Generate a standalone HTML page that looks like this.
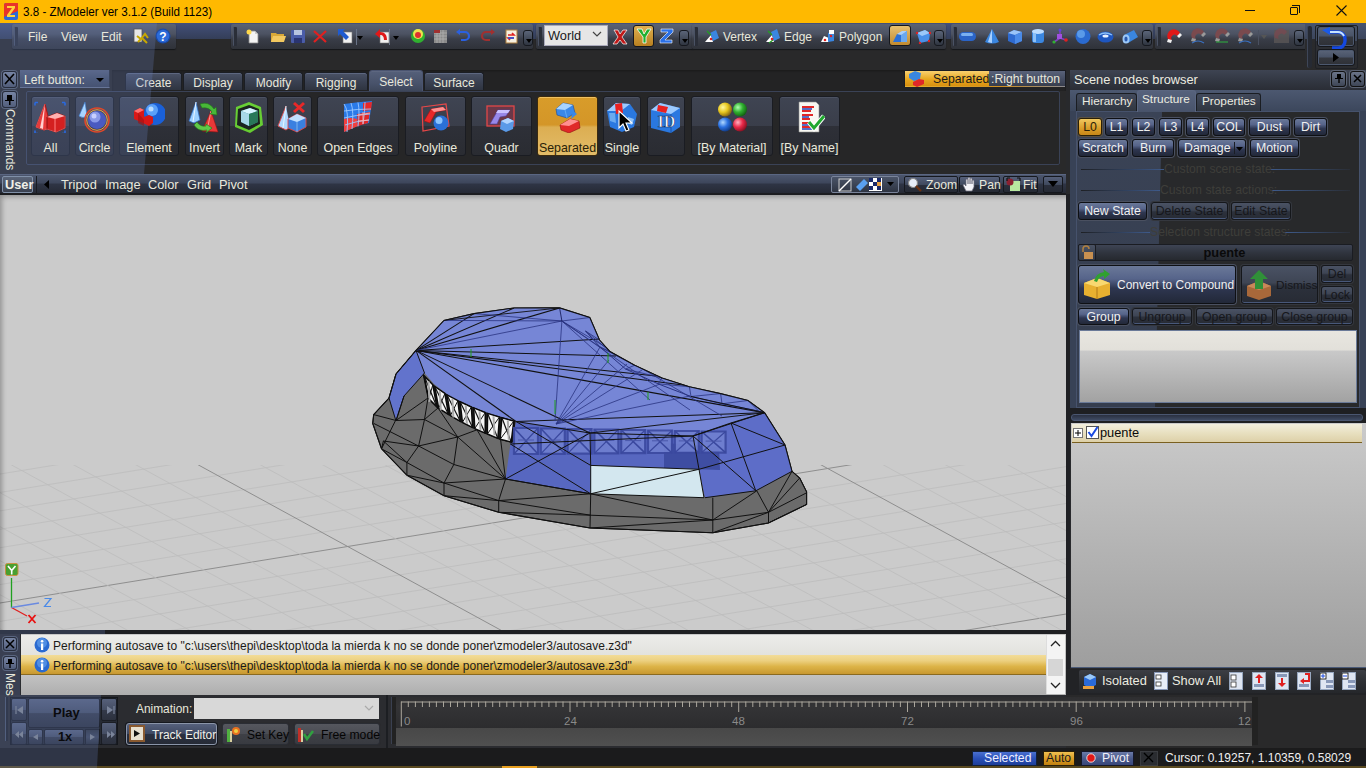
<!DOCTYPE html><html><head><meta charset="utf-8"><style>
*{box-sizing:border-box;margin:0;padding:0}
html,body{width:1366px;height:768px;overflow:hidden;background:#29292a;font-family:"Liberation Sans",sans-serif;font-size:12px;color:#e8e8dc}
.a{position:absolute}
.t{position:absolute;white-space:nowrap;line-height:1}
.grp{position:absolute;background:linear-gradient(#5a6274 0,#4c5262 40%,#393d48 60%,#2f3239 100%);border-radius:2px;box-shadow:0 1px 1px #15171a}
.grip{position:absolute;width:4px;background:#2a2e38;border-left:1px solid #4a5264;border-radius:1px}
.ovf{position:absolute;width:10px;height:16px;border:1px solid #15181e;border-radius:3px;background:linear-gradient(#5a6478,#2f3540)}
.ovf:after{content:"";position:absolute;left:2px;bottom:2px;border-left:3px solid transparent;border-right:3px solid transparent;border-top:4px solid #000}
.cb{position:absolute;border:1px solid #1a1c22;border-radius:3px;background:linear-gradient(#4f5870 0,#465066 50%,#363c4b 50%,#30353f 100%);box-shadow:inset 0 1px 0 #5f6a82}
.cb.dk{background:linear-gradient(#3f4452 0,#3a3e4a 50%,#2e3038 50%,#2a2c32 100%);box-shadow:inset 0 1px 0 #4c5262}
.cb .l{position:absolute;left:0;right:0;bottom:3px;text-align:center;font-size:12px;color:#eaeadc;white-space:nowrap}
.tab{position:absolute;top:72px;height:18px;background:linear-gradient(#4a5266,#3a4152 50%,#2f3440);border:1px solid #1b1e24;border-bottom:none;border-radius:3px 3px 0 0;text-align:center;font-size:12px;padding-top:3px;box-shadow:inset 0 1px 0 #5d6780}
.sb{position:absolute;height:19px;border:1px solid #12141a;border-radius:3px;background:linear-gradient(#5d6985 0,#4a5670 45%,#2e3446 55%,#262b38 100%);box-shadow:inset 0 1px 0 #7080a0,0 0 0 1px #3e4452;text-align:center;font-size:12px;padding-top:3px;color:#eef}
.sb.dis{color:#3c3f46;background:linear-gradient(#3a3f4c,#2e323c 50%,#24272e 55%,#202228);box-shadow:inset 0 1px 0 #4a5060,0 0 0 1px #33373f}
</style></head><body>
<div class="a" style="left:0;top:0;width:1366px;height:23px;background:#ffb900">
<svg class="a" style="left:4px;top:3px" width="14" height="17" viewBox="0 0 14 17"><rect x="0" y="0" width="14" height="17" rx="2" fill="#2a6ad8"/><path d="M0 2 Q0 0 2 0 H14 V8 L0 14Z" fill="#e8332a"/><path d="M3 3 H11 V5 L6 12 H11 V14 H3 V12 L8 5 H3Z" fill="#ffd23a"/></svg>
<div class="t" style="left:23px;top:6px;font-size:12.5px;color:#000;transform:scaleX(0.93);transform-origin:0 0">3.8 - ZModeler ver 3.1.2 (Build 1123)</div>
<div class="a" style="left:1245px;top:10px;width:10px;height:1px;background:#111"></div>
<div class="a" style="left:1292px;top:5px;width:8px;height:8px;border:1px solid #111;border-width:1px 1px 0 0;border-radius:0 1px 0 0"></div>
<div class="a" style="left:1290px;top:7px;width:8px;height:8px;border:1px solid #111;border-radius:1px"></div>
<svg class="a" style="left:1336px;top:5px" width="11" height="11"><path d="M0.5 0.5 L10.5 10.5 M10.5 0.5 L0.5 10.5" stroke="#111" stroke-width="1.1"/></svg>
</div>
<div class="a" style="left:0;top:23px;width:1366px;height:171px;background:#29292a"></div>
<div class="a" style="left:0;top:23px;width:1366px;height:16px;background:linear-gradient(#43507a,#343e58)"></div>
<div class="a" style="left:112px;top:70px;width:954px;height:21px;background:#232324;box-shadow:inset 0 1px 2px #1a1a1a"></div>
<div class="grp" style="left:12px;top:24px;width:164px;height:25px"></div>
<div class="grip" style="left:14px;top:27px;height:19px"></div>
<div class="grp" style="left:231px;top:24px;width:302px;height:25px"></div>
<div class="grip" style="left:233px;top:27px;height:19px"></div>
<div class="a" style="left:356px;top:29px;width:1px;height:16px;background:#22262e;border-right:1px solid #6a7488"></div>
<div class="a" style="left:389px;top:29px;width:1px;height:16px;background:#22262e;border-right:1px solid #6a7488"></div>
<div class="ovf" style="left:523px;top:30px"></div>
<div class="grp" style="left:536px;top:24px;width:158px;height:25px"></div>
<div class="grip" style="left:538px;top:27px;height:19px"></div>
<div class="a" style="left:544px;top:25px;width:64px;height:21px;background:#e6e6e6;border:1px solid #aab"></div>
<div class="a" style="left:633px;top:25px;width:21px;height:22px;background:linear-gradient(#e0b050,#b88020);border:1px solid #15171c;border-radius:3px"></div>
<div class="ovf" style="left:679px;top:30px"></div>
<div class="grp" style="left:692px;top:24px;width:254px;height:25px"></div>
<div class="grip" style="left:694px;top:27px;height:19px"></div>
<div class="a" style="left:889px;top:25px;width:22px;height:21px;background:linear-gradient(#e8c070,#c08a30);border:1px solid #15171c;border-radius:3px"></div>
<div class="ovf" style="left:934px;top:30px"></div>
<div class="grp" style="left:951px;top:24px;width:202px;height:25px"></div>
<div class="grip" style="left:953px;top:27px;height:19px"></div>
<div class="ovf" style="left:1142px;top:30px"></div>
<div class="grp" style="left:1155px;top:24px;width:152px;height:25px"></div>
<div class="grip" style="left:1157px;top:27px;height:19px"></div>
<div class="a" style="left:1258px;top:30px;width:1px;height:15px;background:#4a5060"></div>
<div class="ovf" style="left:1294px;top:30px"></div>
<div class="a" style="left:1305px;top:23px;width:61px;height:47px;background:linear-gradient(#485470 0,#3c465c 33%,#2a2b2e 34%,#29292a 100%)"></div>
<div class="a" style="left:1307px;top:26px;width:5px;height:42px;background:#262a33;border-left:1px solid #3e4658;border-radius:2px"></div>
<div class="a" style="left:1315px;top:25px;width:43px;height:44px;background:linear-gradient(#4a5468 0,#404a5e 35%,#2e3036 36%,#2a2b2e);border:1px solid #1f2126;border-radius:2px"></div>
<div class="a" style="left:1317px;top:26px;width:38px;height:21px;border:1px solid #15171c;border-radius:3px;background:linear-gradient(#5a6478,#4a5468 45%,#35383f 55%,#2e3036);box-shadow:inset 0 0 0 1px #4c586e"></div>
<div class="a" style="left:1317px;top:49px;width:38px;height:17px;border:1px solid #15171c;border-radius:3px;background:linear-gradient(#5a6478,#4a5468 45%,#35383f 55%,#2e3036);box-shadow:inset 0 0 0 1px #4c586e"></div>
<div class="a" style="left:2px;top:71px;width:15px;height:17px;border:1px solid #111;border-radius:3px;background:linear-gradient(#7a8498,#4a5264);box-shadow:0 0 0 1px #555c6a"></div>
<div class="a" style="left:2px;top:91px;width:15px;height:17px;border:1px solid #111;border-radius:3px;background:linear-gradient(#7a8498,#4a5264);box-shadow:0 0 0 1px #555c6a"></div>
<div class="a" style="left:20px;top:70px;width:90px;height:18px;background:linear-gradient(#56607a,#455068 50%,#3a4358);border-bottom:1px solid #66708a;border-right:1px solid #2a2f3a"></div>
<div class="tab" style="left:125px;width:57px">Create</div>
<div class="tab" style="left:183px;width:60px">Display</div>
<div class="tab" style="left:244px;width:59px">Modify</div>
<div class="tab" style="left:304px;width:64px">Rigging</div>
<div class="tab" style="left:424px;width:60px">Surface</div>
<div class="tab" style="left:369px;width:54px;top:70px;height:22px;padding-top:4px;background:linear-gradient(#55607a,#48526a 60%,#3c4558);border-color:#4a5470">Select</div>
<div class="a" style="left:904px;top:70px;width:162px;height:17px;background:linear-gradient(#59627a,#474f64 50%,#373d4c);border:1px solid #1a1c22"></div>
<div class="a" style="left:905px;top:71px;width:84px;height:15px;background:linear-gradient(#f8d070,#e8a820 55%,#d89010)"></div>
<div class="a" style="left:905px;top:86px;width:160px;height:1px;background:linear-gradient(90deg,#e8b030,#d09020 60%,#8a8a90)"></div>
<div class="a" style="left:26px;top:91px;width:1034px;height:74px;background:#262627;border:1px solid #3a4256;border-radius:2px"></div>
<div class="cb dk" style="left:31px;top:96px;width:39px;height:60px;"></div>
<div class="cb dk" style="left:75px;top:96px;width:39px;height:60px;"></div>
<div class="cb dk" style="left:119px;top:96px;width:60px;height:60px;"></div>
<div class="cb dk" style="left:185px;top:96px;width:39px;height:60px;"></div>
<div class="cb dk" style="left:229px;top:96px;width:39px;height:60px;"></div>
<div class="cb dk" style="left:273px;top:96px;width:39px;height:60px;"></div>
<div class="cb dk" style="left:317px;top:96px;width:82px;height:60px;"></div>
<div class="cb dk" style="left:405px;top:96px;width:61px;height:60px;"></div>
<div class="cb dk" style="left:471px;top:96px;width:61px;height:60px;"></div>
<div class="cb" style="left:537px;top:96px;width:61px;height:60px;background:linear-gradient(#d89c2a 0,#d49628 48%,#dcae52 52%,#e2bc68 100%);border-color:#3a2a10;box-shadow:inset 0 1px 0 #f0c060"></div>
<div class="cb dk" style="left:603px;top:96px;width:38px;height:60px;"></div>
<div class="cb dk" style="left:647px;top:96px;width:38px;height:60px;"></div>
<div class="cb dk" style="left:691px;top:96px;width:82px;height:60px;"></div>
<div class="cb dk" style="left:779px;top:96px;width:61px;height:60px;"></div>
<div class="a" style="left:0px;top:174px;width:1066px;height:19px;background:linear-gradient(#4e5870,#3e475c 45%,#2e3444 55%,#262a35)"></div>
<div class="a" style="left:0px;top:174px;width:1066px;height:1px;background:#5a6682"></div>
<div class="a" style="left:2px;top:176px;width:31px;height:17px;border:1px solid #8090a8;background:linear-gradient(#5a6478,#3a4150);border-radius:2px"></div>
<div class="a" style="left:36px;top:176px;width:1px;height:17px;background:#1a1c22"></div>
<div class="a" style="left:831px;top:176px;width:68px;height:17px;border:1px solid #7a849a;border-radius:2px;background:linear-gradient(#4a5468,#2e3442)"></div>
<div class="a" style="left:904px;top:176px;width:54px;height:17px;border:1px solid #15181e;border-radius:2px;background:linear-gradient(#56607a,#404a5e 50%,#2a2f3c 52%,#262a34)"></div>
<div class="a" style="left:959px;top:176px;width:41px;height:17px;border:1px solid #15181e;border-radius:2px;background:linear-gradient(#56607a,#404a5e 50%,#2a2f3c 52%,#262a34)"></div>
<div class="a" style="left:1003px;top:176px;width:35px;height:17px;border:1px solid #15181e;border-radius:2px;background:linear-gradient(#56607a,#404a5e 50%,#2a2f3c 52%,#262a34)"></div>
<div class="a" style="left:1043px;top:176px;width:20px;height:17px;border:1px solid #15181e;border-radius:2px;background:linear-gradient(#56607a,#404a5e 50%,#2a2f3c 52%,#262a34)"></div>
<div class="a" style="left:0px;top:23px;width:158px;height:151px;background:rgba(108,130,195,0.25);clip-path:polygon(0 0,157px 0,144px 151px,0 151px);pointer-events:none"></div>
<div class="t" style="left:28px;top:31px;font-size:12px;color:#e8e8dc;">File</div>
<div class="t" style="left:61px;top:31px;font-size:12px;color:#e8e8dc;">View</div>
<div class="t" style="left:101px;top:31px;font-size:12px;color:#e8e8dc;">Edit</div>
<svg class="a" style="left:133px;top:28px;" width="16" height="16" viewBox="0 0 16 16"><rect x="1" y="1" width="8" height="13" fill="#e8e8e8" stroke="#555" stroke-width=".8"/><path d="M4 8l4 3 4-5 3 4M5 14l4-4 5 5" stroke="#c8a800" stroke-width="2" fill="none"/></svg>
<svg class="a" style="left:155px;top:28px;" width="16" height="16" viewBox="0 0 16 16"><circle cx="8" cy="8" r="7.5" fill="#1a4aa8"/><circle cx="8" cy="8" r="6.3" fill="#2c6ad8"/><text x="8" y="12.5" font-size="12" font-weight="bold" text-anchor="middle" fill="#fff" font-family="Liberation Sans">?</text></svg>
<svg class="a" style="left:245px;top:28px;opacity:1" width="16" height="16" viewBox="0 0 16 16"><path d="M4 3h6l3 3v9H4z" fill="#f4f4f4" stroke="#8a8a8a" stroke-width=".8"/><path d="M10 3v3h3" fill="#ccc"/><circle cx="4" cy="4" r="2.5" fill="#ffd84a"/></svg>
<svg class="a" style="left:270px;top:28px;opacity:1" width="16" height="16" viewBox="0 0 16 16"><path d="M1 5h5l1 1h7v8H1z" fill="#d8a838"/><path d="M3 8h13l-2 6H1z" fill="#f2c860"/></svg>
<svg class="a" style="left:290px;top:28px;opacity:1" width="16" height="16" viewBox="0 0 16 16"><rect x="1" y="2" width="14" height="13" rx="1" fill="#4a5ca8"/><rect x="4" y="2" width="8" height="5" fill="#b8c4e0"/><rect x="4" y="10" width="8" height="5" fill="#2a3470"/></svg>
<svg class="a" style="left:312px;top:28px;opacity:1" width="16" height="16" viewBox="0 0 16 16"><path d="M2 3L14 14M14 3L2 14" stroke="#e02020" stroke-width="2.2"/></svg>
<svg class="a" style="left:337px;top:28px;opacity:1" width="16" height="16" viewBox="0 0 16 16"><rect x="6" y="4" width="9" height="11" fill="#f0f0f0" stroke="#777" stroke-width=".6"/><path d="M1 1h7l-2 2 6 6-3 3-6-6-2 2z" fill="#1e5ad0"/></svg>
<svg class="a" style="left:374px;top:28px;opacity:1" width="16" height="16" viewBox="0 0 16 16"><rect x="6" y="4" width="9" height="11" fill="#f0f0f0" stroke="#777" stroke-width=".6"/><path d="M1 6l5-5v3c5 0 7 3 7 8h-3c0-3-1-5-4-5v3z" fill="#e01818"/></svg>
<svg class="a" style="left:410px;top:28px;opacity:1" width="16" height="16" viewBox="0 0 16 16"><circle cx="8" cy="8" r="7" fill="#30b030"/><circle cx="8" cy="6" r="5" fill="#f0e050"/><circle cx="8" cy="7" r="3" fill="#e03030"/></svg>
<svg class="a" style="left:432px;top:28px;opacity:1" width="16" height="16" viewBox="0 0 16 16"><rect x="2" y="2" width="13" height="13" fill="#8a8a8a"/><path d="M2 5h13M2 8h13M2 11h13M5 2v13M8 2v13M11 2v13" stroke="#b0b0b0" stroke-width=".8"/><rect x="2" y="2" width="6" height="3" fill="#a03030"/></svg>
<svg class="a" style="left:455px;top:28px;opacity:1" width="16" height="16" viewBox="0 0 16 16"><path d="M4 4h6a4 4 0 0 1 0 8H6" fill="none" stroke="#2a60e0" stroke-width="2.2"/><path d="M1 4l4-3v6z" fill="#2a60e0"/></svg>
<svg class="a" style="left:480px;top:28px;opacity:1" width="16" height="16" viewBox="0 0 16 16"><path d="M12 4H6a4 4 0 0 0 0 8h4" fill="none" stroke="#a03030" stroke-width="2.2"/><path d="M15 4l-4-3v6z" fill="#a03030"/></svg>
<svg class="a" style="left:503px;top:28px;opacity:1" width="16" height="16" viewBox="0 0 16 16"><rect x="3" y="2" width="11" height="13" fill="#f6f0e0" stroke="#b08040" stroke-width="1"/><path d="M5 7h6l-2-2M11 10H5l2 2" stroke="#e02020" stroke-width="1.6" fill="none"/><path d="M5 10h6" stroke="#2050e0" stroke-width="1.6"/></svg>
<svg class="a" style="left:357px;top:36px;" width="6" height="4" viewBox="0 0 6 4"><path d="M0 0h6L3 4z" fill="#000"/></svg>
<svg class="a" style="left:393px;top:36px;" width="6" height="4" viewBox="0 0 6 4"><path d="M0 0h6L3 4z" fill="#000"/></svg>
<div class="t" style="left:548px;top:30px;font-size:12.8px;color:#1a1a1a;">World</div>
<svg class="a" style="left:592px;top:31px;" width="10" height="7" viewBox="0 0 10 7"><path d="M1 1l4 4 4-4" stroke="#444" stroke-width="1.2" fill="none"/></svg>
<svg class="a" style="left:612px;top:27px;" width="16" height="18" viewBox="0 0 16 18"><path d="M2 3h4l2 4 3-4h4l-5 7 5 7h-4l-3-4-3 4H1l5-7z" fill="#c01818" stroke="#fff" stroke-width=".7"/></svg>
<svg class="a" style="left:636px;top:27px;" width="16" height="18" viewBox="0 0 16 18"><path d="M1 2h5l2 5 3-5h4l-5 8v6H7v-6z" fill="#20b030" stroke="#fff" stroke-width=".8"/></svg>
<svg class="a" style="left:659px;top:27px;" width="16" height="18" viewBox="0 0 16 18"><path d="M2 2h12v3l-8 8h7v3H1v-3l8-8H2z" fill="#2a70e8" stroke="#fff" stroke-width=".6"/></svg>
<svg class="a" style="left:704px;top:28px;opacity:1" width="16" height="16" viewBox="0 0 16 16"><path d="M1 14L7 7l2 7z" fill="#fff"/><path d="M6 5l6-3 3 8-6 3z" fill="#3a86e0"/><path d="M3 3l4 4" stroke="#20a020" stroke-width="1.2"/><circle cx="7" cy="11" r="1.3" fill="#e02020"/></svg>
<div class="t" style="left:723px;top:31px;font-size:12px;color:#e8e8dc;">Vertex</div>
<svg class="a" style="left:765px;top:28px;opacity:1" width="16" height="16" viewBox="0 0 16 16"><path d="M1 14L7 7l2 7z" fill="#fff"/><path d="M6 4l6-3 3 9-6 3z" fill="#3a86e0"/><path d="M3 3l4 4M4 15l4-3" stroke="#20a020" stroke-width="1.2"/><circle cx="7" cy="11" r="1.3" fill="#e02020"/></svg>
<div class="t" style="left:784px;top:31px;font-size:12px;color:#e8e8dc;">Edge</div>
<svg class="a" style="left:820px;top:28px;opacity:1" width="16" height="16" viewBox="0 0 16 16"><path d="M1 14l3-6 5 2v4z" fill="#fff"/><path d="M8 5l6-2v10l-6 1z" fill="#3a86e0"/><rect x="9" y="2" width="5" height="4" fill="#fff"/><circle cx="5" cy="12" r="1.3" fill="#e02020"/><circle cx="11" cy="8" r="1.2" fill="#e02020"/></svg>
<div class="t" style="left:839px;top:31px;font-size:12px;color:#e8e8dc;">Polygon</div>
<svg class="a" style="left:892px;top:28px;" width="16" height="16" viewBox="0 0 16 16"><path d="M1 14l4-8 5 1 5-4v11z" fill="#2a70d8"/><path d="M5 6l5-3 5 0-5 4z" fill="#a8d0ff"/><path d="M9 7l6-4v11H9z" fill="#6aa8f0"/></svg>
<svg class="a" style="left:915px;top:28px;opacity:1" width="16" height="16" viewBox="0 0 16 16"><path d="M2 5l8-3 5 3-1 8-9 2z" fill="#4a90e8"/><path d="M2 5l8-3 5 3-8 3z" fill="#9cc8f8"/><g fill="#e02020"><circle cx="2" cy="5" r="1.2"/><circle cx="15" cy="5" r="1.2"/><circle cx="5" cy="15" r="1.2"/><circle cx="14" cy="13" r="1.2"/></g></svg>
<svg class="a" style="left:959px;top:28px;opacity:1" width="17" height="17" viewBox="0 0 17 17"><rect x="0" y="4" width="17" height="9" rx="4.5" fill="#2a64c8"/><rect x="2" y="5" width="12" height="3" rx="1.5" fill="#7ab0f0"/></svg>
<svg class="a" style="left:984px;top:28px;opacity:1" width="17" height="17" viewBox="0 0 17 17"><path d="M8 1L1 14q7 3 14 0z" fill="#3a86e0"/><path d="M8 1L4 14q3 1 4 1z" fill="#a8d0ff"/></svg>
<svg class="a" style="left:1007px;top:28px;opacity:1" width="17" height="17" viewBox="0 0 17 17"><path d="M1 5l6-3 8 2v9l-7 3-7-3z" fill="#2e6ad0"/><path d="M1 5l6-3 8 2-7 3z" fill="#9ac4f8"/><path d="M8 7v9l7-3V4z" fill="#4a8ae8"/></svg>
<svg class="a" style="left:1030px;top:28px;opacity:1" width="17" height="17" viewBox="0 0 17 17"><rect x="2" y="2" width="12" height="13" rx="3" fill="#3a86e0"/><ellipse cx="8" cy="3.5" rx="6" ry="2.5" fill="#bcdcff"/><rect x="3" y="5" width="3" height="9" fill="#8cc0f8"/></svg>
<svg class="a" style="left:1052px;top:28px;opacity:1" width="17" height="17" viewBox="0 0 17 17"><path d="M8 2v8M8 10l6 2M8 10l-6 4" stroke="#8040c0" stroke-width="1.6"/><rect x="5" y="6" width="5" height="5" fill="#a050e0"/><circle cx="14" cy="12" r="1.8" fill="#e02020"/><circle cx="2" cy="14" r="1.6" fill="#30b030"/><circle cx="8" cy="2" r="1.5" fill="#6040e0"/></svg>
<svg class="a" style="left:1075px;top:28px;opacity:1" width="17" height="17" viewBox="0 0 17 17"><circle cx="8" cy="8.5" r="7.5" fill="#2a6ad0"/><circle cx="6" cy="6" r="4" fill="#5a9ae8"/></svg>
<svg class="a" style="left:1097px;top:28px;opacity:1" width="17" height="17" viewBox="0 0 17 17"><ellipse cx="8.5" cy="9" rx="8" ry="5.5" fill="#1e56c0"/><ellipse cx="8.5" cy="8" rx="3" ry="1.5" fill="#e8f0ff"/><path d="M2 7q6-4 13 0" stroke="#8cc0f8" stroke-width="1.4" fill="none"/></svg>
<svg class="a" style="left:1122px;top:28px;opacity:1" width="17" height="17" viewBox="0 0 17 17"><path d="M2 7l10-5 4 7-10 6z" fill="#3a86e0"/><ellipse cx="4" cy="11" rx="3.5" ry="4.5" fill="#9cc8f8"/><ellipse cx="4" cy="11" rx="1.6" ry="2.5" fill="#2a5ab0"/></svg>
<svg class="a" style="left:1166px;top:28px;opacity:1" width="16" height="16" viewBox="0 0 16 16"><path d="M2 11A6 6 0 0 1 14 5l-3 3A2 2 0 0 0 6 12z" fill="#e01818"/><path d="M2 11l4 1-1 3-4-1zM14 5l-3 3 2 2 3-3z" fill="#f0f0f0"/></svg>
<svg class="a" style="left:1190px;top:28px;opacity:1" width="16" height="16" viewBox="0 0 16 16"><path d="M2 10A6 6 0 0 1 14 4l-3 3A2 2 0 0 0 6 11z" fill="#7a4a4e"/><path d="M2 10l4 1-1 3-4-1zM14 4l-3 3 2 2 3-3z" fill="#9a9a9a"/><path d="M2 15q6-4 12 0" stroke="#3a70c0" stroke-width="1.2" fill="none"/></svg>
<svg class="a" style="left:1214px;top:28px;opacity:1" width="16" height="16" viewBox="0 0 16 16"><path d="M2 10A6 6 0 0 1 14 4l-3 3A2 2 0 0 0 6 11z" fill="#7a4a4e"/><path d="M2 10l4 1-1 3-4-1zM14 4l-3 3 2 2 3-3z" fill="#9a9a9a"/><path d="M2 14h12" stroke="#30a040" stroke-width="1.2"/></svg>
<svg class="a" style="left:1237px;top:28px;opacity:1" width="16" height="16" viewBox="0 0 16 16"><path d="M2 10A6 6 0 0 1 14 4l-3 3A2 2 0 0 0 6 11z" fill="#7a4a4e"/><path d="M2 10l4 1-1 3-4-1zM14 4l-3 3 2 2 3-3z" fill="#9a9a9a"/><path d="M2 15q6-4 12 0" stroke="#3a70c0" stroke-width="1.2" fill="none"/></svg>
<svg class="a" style="left:1261px;top:35px;" width="6" height="4" viewBox="0 0 6 4"><path d="M0 0h6L3 4z" fill="#555"/></svg>
<svg class="a" style="left:1273px;top:28px;opacity:0.8" width="17" height="16" viewBox="0 0 17 16"><rect x="1" y="2" width="15" height="13" fill="#5a5656"/><path d="M2 10A6 6 0 0 1 14 4l-3 3A2 2 0 0 0 6 11z" fill="#7a4a4e"/></svg>
<svg class="a" style="left:1320px;top:26px;" width="30" height="23" viewBox="0 0 30 23"><path d="M9 6h9a7 7 0 0 1 7 7v2a7 7 0 0 1-7 7h-6" fill="none" stroke="#1448e0" stroke-width="3.4"/><path d="M9 6h9a7 7 0 0 1 6 4" fill="none" stroke="#c8e4ff" stroke-width="2"/><path d="M2 4l8-3v8z" fill="#1a5ae8"/></svg>
<svg class="a" style="left:1333px;top:53px;" width="6" height="9" viewBox="0 0 6 9"><path d="M0 0l6 4.5L0 9z" fill="#000"/></svg>
<svg class="a" style="left:4px;top:73px;" width="11" height="12" viewBox="0 0 11 12"><path d="M1 1l9 10M10 1L1 11" stroke="#000" stroke-width="1.6"/></svg>
<svg class="a" style="left:4px;top:93px;" width="11" height="12" viewBox="0 0 11 12"><path d="M3 2h5v5h2v1H1V7h2z" fill="#000"/><rect x="5" y="8" width="1.5" height="4" fill="#000"/></svg>
<div class="t" style="left:3px;top:109px;font-size:12px;color:#e8e8dc;transform-origin:0 0;transform:rotate(90deg) translate(0,-13px);">Commands</div>
<div class="t" style="left:24px;top:74px;font-size:12.2px;color:#e8e8dc;">Left button:</div>
<svg class="a" style="left:96px;top:78px;" width="8" height="4" viewBox="0 0 8 4"><path d="M0 0h8L4 4z" fill="#000"/></svg>
<svg class="a" style="left:907px;top:70px;" width="18" height="17" viewBox="0 0 18 17"><path d="M2 4l6-3 6 2-1 6-6 2-5-3z" fill="#3a86e0"/><path d="M6 12l6-3 5 1v4l-7 3-4-2z" fill="#e02828"/></svg>
<div class="t" style="left:933px;top:73px;font-size:12.2px;color:#1a1a1a;">Separated</div>
<div class="t" style="left:991px;top:73px;font-size:12.2px;color:#e8e8dc;">:Right button</div>
<div class="t" style="left:31px;top:142px;width:39px;text-align:center;font-size:12.4px;color:#eaeadc">All</div>
<svg class="a" style="left:34px;top:101px;" width="32" height="32" viewBox="0 0 32 32"><path d="M1 1.5h3M1 1.5v3M31 1.5h-3M31 1.5v3M1 32.5h3M1 32.5v-3M31 32.5h-3M31 32.5v-3" stroke="#2a6ae0" stroke-width="1.6"/><path d="M11 3L2 26l8 3 7-2z" fill="#e83a3a" stroke="#a01818" stroke-width="1"/><path d="M11 3L6 27l3 1z" fill="#ffd0d0"/><path d="M13 16l10-4 8 3v12l-9 4-9-3z" fill="#d42020" stroke="#901010" stroke-width="1"/><path d="M13 16l10-4 8 3-10 3z" fill="#ffb0b0"/><path d="M21 18v13" stroke="#ff8080" stroke-width="1"/><path d="M11 3L2 26l8 3 3-1 9 3 9-4V15" fill="none" stroke="#ff7070" stroke-width=".8" opacity=".8"/></svg>
<div class="t" style="left:75px;top:142px;width:39px;text-align:center;font-size:12.4px;color:#eaeadc">Circle</div>
<svg class="a" style="left:78px;top:101px;" width="32" height="32" viewBox="0 0 32 32"><path d="M7 1L1 15q4 3 8 0z" fill="#a8d4ff" stroke="#3a7ad0" stroke-width=".6"/><circle cx="19" cy="19" r="12" fill="none" stroke="#e04828" stroke-width="1.6"/><circle cx="19" cy="19" r="10.3" fill="none" stroke="#e8a040" stroke-width="1"/><circle cx="19" cy="19" r="9" fill="#4a5ac0"/><circle cx="17" cy="16" r="5.5" fill="#8a9ae8"/><circle cx="16" cy="15" r="2.5" fill="#c8d0ff"/></svg>
<div class="t" style="left:119px;top:142px;width:60px;text-align:center;font-size:12.4px;color:#eaeadc">Element</div>
<svg class="a" style="left:133px;top:101px;" width="32" height="32" viewBox="0 0 32 32"><circle cx="22" cy="13" r="11" fill="#1a60d8"/><circle cx="19" cy="9" r="6" fill="#5aa0f8"/><circle cx="18" cy="8" r="2.5" fill="#b8dcff"/><path d="M1 10l6-3 4 2v7l5-2 4 2v6l-4 3-6-3-9-4z" fill="#d81818"/><path d="M1 10l6-3 4 2-6 3z" fill="#ff7070"/><path d="M5 12v10l6 3v-6" fill="#a01010" opacity=".6"/></svg>
<div class="t" style="left:185px;top:142px;width:39px;text-align:center;font-size:12.4px;color:#eaeadc">Invert</div>
<svg class="a" style="left:188px;top:101px;" width="32" height="32" viewBox="0 0 32 32"><path d="M8 1L1 20l5 2 6-3z" fill="#9cd0ff" stroke="#2a6ac8" stroke-width=".7"/><path d="M8 1L5 21" stroke="#e8f4ff" stroke-width="1"/><path d="M23 10L14 30l16 1z" fill="#e83838" stroke="#a01010" stroke-width=".6"/><path d="M23 10l-4 20" stroke="#ff9090" stroke-width="1"/><path d="M12 3q9-3 14 5l2-2 1 8-7-1 2-2q-3-5-10-4z" fill="#48b838" stroke="#207818" stroke-width=".6"/><path d="M6 24q4 7 13 5l-1 3 6-5-6-4v2q-6 1-9-4z" fill="#60c848" stroke="#207818" stroke-width=".6"/></svg>
<div class="t" style="left:229px;top:142px;width:39px;text-align:center;font-size:12.4px;color:#eaeadc">Mark</div>
<svg class="a" style="left:232px;top:101px;" width="32" height="32" viewBox="0 0 32 32"><path d="M4 6l13-5 12 5 2 18-13 8-15-6z" fill="#70e830" opacity=".85"/><path d="M6 8l11-4 10 4 1 15-11 6-12-5z" fill="#1c2420"/><path d="M9 10l9-3 8 3v11l-9 4-8-4z" fill="#3a9098"/><path d="M9 10l9-3 8 3-9 3z" fill="#d8f4ff"/><path d="M9 10v11l8 4V13z" fill="#a8d8e8"/><path d="M17 13v12l9-4V10z" fill="#287858"/></svg>
<div class="t" style="left:273px;top:142px;width:39px;text-align:center;font-size:12.4px;color:#eaeadc">None</div>
<svg class="a" style="left:276px;top:101px;" width="32" height="32" viewBox="0 0 32 32"><path d="M10 5L2 25l8 4 4-3" fill="#b0d8ff" stroke="#e04848" stroke-width=".9"/><path d="M10 5L7 27" stroke="#e8f4ff" stroke-width="1"/><path d="M12 18l9-5 9 4v9l-9 5-9-4z" fill="#3a80e0" stroke="#e04848" stroke-width=".9"/><path d="M12 18l9-5 9 4-9 4z" fill="#c0e0ff"/><path d="M21 21v10" stroke="#90c0f0" stroke-width=".8"/><path d="M18 2l10 9M28 2l-10 9" stroke="#e82828" stroke-width="3"/></svg>
<div class="t" style="left:317px;top:142px;width:82px;text-align:center;font-size:12.4px;color:#eaeadc">Open Edges</div>
<svg class="a" style="left:342px;top:101px;" width="32" height="32" viewBox="0 0 32 32"><path d="M2 3q14-2 28-3l-3 22q-12 2-25 9z" fill="#2a7ae8"/><path d="M2 18q7-2 13 0l1 7-14 6z" fill="#f04040"/><path d="M15 13l13-2-2 11-10 3z" fill="#e02828"/><path d="M21 2l9-1-1 8-8 1z" fill="#e82828"/><path d="M2 3q5 6 3 28M9 2q3 8 1 26M16 1.5q2 9 0 24M23 1q0 8-2 22M2 10q13-2 27-2M2 17q12-3 26-4M3 24q11-4 24-5" stroke="#9cc8ff" stroke-width=".9" fill="none"/><path d="M16 14l12-2M16 20l11-1M21 11v12" stroke="#ffb0b0" stroke-width=".9"/></svg>
<div class="t" style="left:405px;top:142px;width:61px;text-align:center;font-size:12.4px;color:#eaeadc">Polyline</div>
<svg class="a" style="left:419px;top:101px;" width="32" height="32" viewBox="0 0 32 32"><path d="M3 6l24-3 3 22-26 5z" fill="none" stroke="#e84848" stroke-width="1.2"/><path d="M5 20l7-12 12-2 3 3-10 2-6 11z" fill="#e82828" stroke="#a01010" stroke-width=".6"/><path d="M12 8l12-2 3 3-12 2z" fill="#ff9090"/><circle cx="22" cy="22" r="7.5" fill="#2a70d8"/><circle cx="20" cy="19.5" r="3.5" fill="#8ac4ff"/></svg>
<div class="t" style="left:471px;top:142px;width:61px;text-align:center;font-size:12.4px;color:#eaeadc">Quadr</div>
<svg class="a" style="left:485px;top:101px;" width="32" height="32" viewBox="0 0 32 32"><rect x="2" y="5" width="27" height="20" fill="#6a3848" stroke="#e04848" stroke-width="1.3"/><path d="M5 23l8-14h12l-4 6-6 1-3 7z" fill="#9888e8" stroke="#5040a0" stroke-width=".6"/><path d="M13 9h12l-2 3H11z" fill="#c8c0ff"/><path d="M16 20l7-3 6 3-1 8-7 3-6-3z" fill="#5a9ae8"/><path d="M16 20l7-3 6 3-7 3z" fill="#b0d4ff"/></svg>
<div class="t" style="left:537px;top:142px;width:61px;text-align:center;font-size:12.4px;color:#2a2208">Separated</div>
<svg class="a" style="left:551px;top:101px;" width="32" height="32" viewBox="0 0 32 32"><path d="M5 8l7-6 10 2 2 8-8 5-10-3z" fill="#3a88e8" stroke="#1a4a98" stroke-width=".6"/><path d="M5 8l7-6 10 2-8 5z" fill="#a8d4ff"/><path d="M14 9l2 8" stroke="#6ab0f8" stroke-width=".8"/><path d="M22 10l4 3-6 5z" fill="#3a88e8"/><path d="M9 24l10-6 9 2 1 7-11 5-8-3z" fill="#e02828" stroke="#901010" stroke-width=".6"/><path d="M9 24l10-6 9 2-10 5z" fill="#ff9090"/></svg>
<div class="t" style="left:603px;top:142px;width:38px;text-align:center;font-size:12.4px;color:#eaeadc">Single</div>
<svg class="a" style="left:606px;top:101px;" width="32" height="32" viewBox="0 0 32 32"><path d="M1 10l9-8 14 1 7 10-3 13-12 5-12-5z" fill="#2a78e0"/><path d="M1 10l9-8 14 1-9 7z" fill="#9ccaff"/><path d="M9 3l7-1 1 10-7 1z" fill="#e82020"/><path d="M3 12l6 0 1 10-6-2z" fill="#6aaaf0"/><path d="M22 16l6 2-2 6-5-2z" fill="#8cc0f8"/><path d="M13 10v17l4-4 3 7 3-1-3-7h6z" fill="#000" stroke="#fff" stroke-width="1.1"/></svg>
<div class="t" style="left:647px;top:142px;width:38px;text-align:center;font-size:12.4px;color:#eaeadc"></div>
<svg class="a" style="left:650px;top:101px;" width="32" height="32" viewBox="0 0 32 32"><path d="M1 9l9-7 20 5v19l-9 6-20-5z" fill="#2a78e0"/><path d="M1 9l9-7 20 5-9 6z" fill="#9ccaff"/><path d="M8 4l10 2-2 6-9-2z" fill="#e82020"/><path d="M21 13v19" stroke="#1a4a98" stroke-width=".8"/><text x="16.5" y="26" font-family="Liberation Serif" font-weight="bold" font-size="16" fill="#fff" text-anchor="middle" stroke="#0a2a60" stroke-width=".6">ID</text></svg>
<div class="t" style="left:691px;top:142px;width:82px;text-align:center;font-size:12.4px;color:#eaeadc">[By Material]</div>
<svg class="a" style="left:716px;top:101px;" width="32" height="32" viewBox="0 0 32 32"><defs><radialGradient id="gy" cx=".35" cy=".35" r=".7"><stop offset="0" stop-color="#fff8a0"/><stop offset=".5" stop-color="#e8c820"/><stop offset="1" stop-color="#806010"/></radialGradient><radialGradient id="gg" cx=".35" cy=".35" r=".7"><stop offset="0" stop-color="#b0ffb0"/><stop offset=".5" stop-color="#30b030"/><stop offset="1" stop-color="#106010"/></radialGradient><radialGradient id="gb" cx=".35" cy=".35" r=".7"><stop offset="0" stop-color="#b0d8ff"/><stop offset=".5" stop-color="#2a70e0"/><stop offset="1" stop-color="#103880"/></radialGradient><radialGradient id="gr" cx=".35" cy=".35" r=".7"><stop offset="0" stop-color="#ffb0c0"/><stop offset=".5" stop-color="#e82848"/><stop offset="1" stop-color="#801020"/></radialGradient></defs><circle cx="9" cy="8.5" r="7" fill="url(#gy)"/><circle cx="24" cy="8.5" r="7" fill="url(#gg)"/><circle cx="9" cy="23.5" r="7" fill="url(#gb)"/><circle cx="24" cy="23.5" r="7" fill="url(#gr)"/></svg>
<div class="t" style="left:779px;top:142px;width:61px;text-align:center;font-size:12.4px;color:#eaeadc">[By Name]</div>
<svg class="a" style="left:793px;top:101px;" width="32" height="32" viewBox="0 0 32 32"><path d="M6 1h17l3 3v27H6z" fill="#f8f8f2" stroke="#909090" stroke-width=".6"/><path d="M9 6h12M9 10h9M9 14h11M9 18h8M9 22h10M9 26h9" stroke="#e02828" stroke-width="1.8"/><path d="M9 8h10M9 16h7M9 24h8M9 28h12" stroke="#2040b8" stroke-width="1.5"/><path d="M16 21l5 6 10-12" stroke="#fff" stroke-width="5" fill="none"/><path d="M16 21l5 6 10-12" stroke="#20a830" stroke-width="3" fill="none"/></svg>
<div class="t" style="left:5px;top:179px;font-size:12.8px;color:#f0f0e8;"><b>User</b></div>
<svg class="a" style="left:44px;top:180px;" width="5" height="9" viewBox="0 0 5 9"><path d="M5 0v9L0 4.5z" fill="#000"/></svg>
<div class="t" style="left:61px;top:179px;font-size:12.8px;color:#e8e8dc;">Tripod</div>
<div class="t" style="left:105px;top:179px;font-size:12.8px;color:#e8e8dc;">Image</div>
<div class="t" style="left:148px;top:179px;font-size:12.8px;color:#e8e8dc;">Color</div>
<div class="t" style="left:187px;top:179px;font-size:12.8px;color:#e8e8dc;">Grid</div>
<div class="t" style="left:219px;top:179px;font-size:12.8px;color:#e8e8dc;">Pivot</div>
<svg class="a" style="left:838px;top:178px;" width="14" height="14" viewBox="0 0 14 14"><rect x="1" y="1" width="12" height="12" fill="none" stroke="#ccc" stroke-width="1"/><path d="M1 13L13 1" stroke="#fff" stroke-width="1.4"/></svg>
<svg class="a" style="left:855px;top:178px;" width="14" height="14" viewBox="0 0 14 14"><path d="M1 9l8-8 4 4-8 8z" fill="#5aa0f0"/></svg>
<svg class="a" style="left:869px;top:178px;" width="13" height="13" viewBox="0 0 13 13"><rect x="0" y="0" width="13" height="13" fill="#fff"/><g fill="#1a2a6a"><rect x="0" y="0" width="4" height="4"/><rect x="8" y="0" width="4" height="4"/><rect x="4" y="4" width="4" height="4"/><rect x="0" y="8" width="4" height="4"/><rect x="8" y="8" width="4" height="4"/></g><rect x="8" y="4" width="4" height="4" fill="#e8a040"/></svg>
<svg class="a" style="left:887px;top:182px;" width="7" height="4" viewBox="0 0 7 4"><path d="M0 0h7L3.5 4z" fill="#000"/></svg>
<svg class="a" style="left:907px;top:177px;" width="15" height="15" viewBox="0 0 15 15"><circle cx="6" cy="6" r="4.5" fill="#e8eef8" stroke="#888" stroke-width="1.2"/><path d="M9 9l5 5" stroke="#6a3010" stroke-width="2.2"/></svg>
<div class="t" style="left:926px;top:179px;font-size:12.2px;color:#e8e8dc;">Zoom</div>
<svg class="a" style="left:962px;top:177px;" width="15" height="15" viewBox="0 0 15 15"><path d="M4 14L1 8l1-1 2 2V3a1 1 0 0 1 2 0v4V1.5a1 1 0 0 1 2 0V7V2a1 1 0 0 1 2 0v5V4a1 1 0 0 1 2 0v6l-2 4z" fill="#f4f4f8" stroke="#6a6a7a" stroke-width=".7"/></svg>
<div class="t" style="left:979px;top:179px;font-size:12.2px;color:#e8e8dc;">Pan</div>
<svg class="a" style="left:1006px;top:177px;" width="15" height="15" viewBox="0 0 15 15"><rect x="4" y="4" width="10" height="10" fill="#b8e8a0"/><circle cx="4" cy="5" r="3.5" fill="#8a2030"/><path d="M1 1h3M1 1v3M14 1h-3M14 1v3" stroke="#111" stroke-width="1.2"/></svg>
<div class="t" style="left:1023px;top:179px;font-size:12.2px;color:#e8e8dc;">Fit</div>
<svg class="a" style="left:1048px;top:181px;" width="10" height="6" viewBox="0 0 10 6"><path d="M0 0h10L5 6z" fill="#000"/></svg>
<div class="a" style="left:0px;top:193px;width:1066px;height:2px;background:#1c1d20"></div>
<div class="a" style="left:0;top:195px;width:1066px;height:435px;background:#cbcbcb;overflow:hidden">
<svg class="a" style="left:0;top:-1px" width="1066" height="436" viewBox="0 0 1066 436"><defs><clipPath id="gclip"><rect x="0" y="271" width="1066" height="170"/></clipPath></defs>
<g clip-path="url(#gclip)"><line x1="-1300.3" y1="472.9" x2="1579.7" y2="4.9" stroke="#bdbdbd" stroke-width="0.8"/><line x1="-1274.3" y1="487.1" x2="1605.7" y2="19.1" stroke="#bdbdbd" stroke-width="0.8"/><line x1="-1248.3" y1="501.3" x2="1631.7" y2="33.3" stroke="#bdbdbd" stroke-width="0.8"/><line x1="-1222.3" y1="515.5" x2="1657.7" y2="47.5" stroke="#bdbdbd" stroke-width="0.8"/><line x1="-1196.3" y1="529.7" x2="1683.7" y2="61.7" stroke="#bdbdbd" stroke-width="0.8"/><line x1="-1170.3" y1="543.9" x2="1709.7" y2="75.9" stroke="#bdbdbd" stroke-width="0.8"/><line x1="-1144.3" y1="558.1" x2="1735.7" y2="90.1" stroke="#bdbdbd" stroke-width="0.8"/><line x1="-1118.3" y1="572.3" x2="1761.7" y2="104.3" stroke="#bdbdbd" stroke-width="0.8"/><line x1="-1092.3" y1="586.5" x2="1787.7" y2="118.5" stroke="#8e8e8e" stroke-width="1"/><line x1="-1066.3" y1="600.7" x2="1813.7" y2="132.7" stroke="#bdbdbd" stroke-width="0.8"/><line x1="-1040.3" y1="614.9" x2="1839.7" y2="146.9" stroke="#bdbdbd" stroke-width="0.8"/><line x1="-1014.3" y1="629.1" x2="1865.7" y2="161.1" stroke="#bdbdbd" stroke-width="0.8"/><line x1="-988.3" y1="643.3" x2="1891.7" y2="175.3" stroke="#bdbdbd" stroke-width="0.8"/><line x1="-962.3" y1="657.5" x2="1917.7" y2="189.5" stroke="#bdbdbd" stroke-width="0.8"/><line x1="-936.3" y1="671.7" x2="1943.7" y2="203.7" stroke="#bdbdbd" stroke-width="0.8"/><line x1="-910.3" y1="685.9" x2="1969.7" y2="217.9" stroke="#bdbdbd" stroke-width="0.8"/><line x1="-884.3" y1="700.1" x2="1995.7" y2="232.1" stroke="#bdbdbd" stroke-width="0.8"/><line x1="-858.3" y1="714.3" x2="2021.7" y2="246.3" stroke="#bdbdbd" stroke-width="0.8"/><line x1="-832.3" y1="728.5" x2="2047.7" y2="260.5" stroke="#8e8e8e" stroke-width="1"/><line x1="-806.3" y1="742.7" x2="2073.7" y2="274.7" stroke="#bdbdbd" stroke-width="0.8"/><line x1="-780.3" y1="756.9" x2="2099.7" y2="288.9" stroke="#bdbdbd" stroke-width="0.8"/><line x1="-754.3" y1="771.1" x2="2125.7" y2="303.1" stroke="#bdbdbd" stroke-width="0.8"/><line x1="-728.3" y1="785.3" x2="2151.7" y2="317.3" stroke="#bdbdbd" stroke-width="0.8"/><line x1="-702.3" y1="799.5" x2="2177.7" y2="331.5" stroke="#bdbdbd" stroke-width="0.8"/><line x1="-748.3" y1="162.1" x2="291.7" y2="730.1" stroke="#bdbdbd" stroke-width="0.8"/><line x1="-700.3" y1="154.3" x2="339.7" y2="722.3" stroke="#bdbdbd" stroke-width="0.8"/><line x1="-652.3" y1="146.5" x2="387.7" y2="714.5" stroke="#8e8e8e" stroke-width="1"/><line x1="-604.3" y1="138.7" x2="435.7" y2="706.7" stroke="#bdbdbd" stroke-width="0.8"/><line x1="-556.3" y1="130.9" x2="483.7" y2="698.9" stroke="#bdbdbd" stroke-width="0.8"/><line x1="-508.3" y1="123.1" x2="531.7" y2="691.1" stroke="#bdbdbd" stroke-width="0.8"/><line x1="-460.3" y1="115.3" x2="579.7" y2="683.3" stroke="#bdbdbd" stroke-width="0.8"/><line x1="-412.3" y1="107.5" x2="627.7" y2="675.5" stroke="#bdbdbd" stroke-width="0.8"/><line x1="-364.3" y1="99.7" x2="675.7" y2="667.7" stroke="#bdbdbd" stroke-width="0.8"/><line x1="-316.3" y1="91.9" x2="723.7" y2="659.9" stroke="#bdbdbd" stroke-width="0.8"/><line x1="-268.3" y1="84.1" x2="771.7" y2="652.1" stroke="#bdbdbd" stroke-width="0.8"/><line x1="-220.3" y1="76.3" x2="819.7" y2="644.3" stroke="#bdbdbd" stroke-width="0.8"/><line x1="-172.3" y1="68.5" x2="867.7" y2="636.5" stroke="#8e8e8e" stroke-width="1"/><line x1="-124.3" y1="60.7" x2="915.7" y2="628.7" stroke="#bdbdbd" stroke-width="0.8"/><line x1="-76.3" y1="52.9" x2="963.7" y2="620.9" stroke="#bdbdbd" stroke-width="0.8"/><line x1="-28.3" y1="45.1" x2="1011.7" y2="613.1" stroke="#bdbdbd" stroke-width="0.8"/><line x1="19.7" y1="37.3" x2="1059.7" y2="605.3" stroke="#bdbdbd" stroke-width="0.8"/><line x1="67.7" y1="29.5" x2="1107.7" y2="597.5" stroke="#bdbdbd" stroke-width="0.8"/><line x1="115.7" y1="21.7" x2="1155.7" y2="589.7" stroke="#bdbdbd" stroke-width="0.8"/><line x1="163.7" y1="13.9" x2="1203.7" y2="581.9" stroke="#bdbdbd" stroke-width="0.8"/><line x1="211.7" y1="6.1" x2="1251.7" y2="574.1" stroke="#bdbdbd" stroke-width="0.8"/><line x1="259.7" y1="-1.7" x2="1299.7" y2="566.3" stroke="#bdbdbd" stroke-width="0.8"/><line x1="307.7" y1="-9.5" x2="1347.7" y2="558.5" stroke="#8e8e8e" stroke-width="1"/><line x1="355.7" y1="-17.3" x2="1395.7" y2="550.7" stroke="#bdbdbd" stroke-width="0.8"/><line x1="403.7" y1="-25.1" x2="1443.7" y2="542.9" stroke="#bdbdbd" stroke-width="0.8"/><line x1="451.7" y1="-32.9" x2="1491.7" y2="535.1" stroke="#bdbdbd" stroke-width="0.8"/><line x1="499.7" y1="-40.7" x2="1539.7" y2="527.3" stroke="#bdbdbd" stroke-width="0.8"/><line x1="547.7" y1="-48.5" x2="1587.7" y2="519.5" stroke="#bdbdbd" stroke-width="0.8"/><line x1="595.7" y1="-56.3" x2="1635.7" y2="511.7" stroke="#bdbdbd" stroke-width="0.8"/><line x1="643.7" y1="-64.1" x2="1683.7" y2="503.9" stroke="#bdbdbd" stroke-width="0.8"/><line x1="691.7" y1="-71.9" x2="1731.7" y2="496.1" stroke="#bdbdbd" stroke-width="0.8"/><line x1="739.7" y1="-79.7" x2="1779.7" y2="488.3" stroke="#bdbdbd" stroke-width="0.8"/></g>
<polygon points="416.0,156.4 444.0,126.4 474.0,119.6 514.0,114.0 559.6,113.9 589.8,123.5 599.5,146.0 610.0,157.6 634.7,171.3 662.0,184.0 689.4,192.8 720.6,199.6 748.0,206.5 764.6,218.7 785.0,251.0 792.0,277.3 799.7,284.0 806.6,297.8 806.6,310.5 768.5,329.0 712.8,338.8 590.0,334.0 498.7,318.3 444.0,301.7 406.9,281.2 381.5,254.8 372.7,229.4 373.7,220.6 389.0,204.0 396.0,180.0" fill="#6b6b6b" stroke="#111" stroke-width="1"/><polygon points="416.0,156.4 444.0,126.4 474.0,119.6 514.0,114.0 559.6,113.9 589.8,123.5 599.5,146.0 610.0,157.6 634.7,171.3 662.0,184.0 689.4,192.8 720.6,199.6 748.0,206.5 764.6,218.7 731.0,229.0 693.0,242.0 590.0,239.0 516.0,227.5 489.0,220.0 469.0,212.0 450.0,202.5 434.0,190.0 424.5,179.0" fill="#7686d6"/><polygon points="764.6,218.7 785.0,251.0 792.0,277.3 755.8,296.8 705.0,303.7 699.0,275.3 693.0,242.0 731.0,229.0" fill="#5d6dc8"/><polygon points="516.0,227.5 590.0,239.0 693.0,242.0 699.0,275.3 590.7,271.4 590.7,299.8 505.5,285.0 510.4,250.0 512.0,246.5" fill="#5767c0"/><polygon points="664.0,249.0 719.0,253.0 720.0,276.0 664.0,274.0" fill="#3c4a9e" opacity=".9"/><polygon points="590.7,271.4 699.0,275.3 704.0,303.7 590.7,299.8" fill="#d3e7ef" stroke="#111" stroke-width="1"/><line x1="590.7" y1="299.75" x2="699" y2="275.3" stroke="#111" stroke-width="1"/><polygon points="416.0,156.4 396.0,180.0 389.0,204.0 396.0,227.0 404.0,202.0 424.5,179.0" fill="#6273cc" stroke="#111" stroke-width="1"/><polygon points="423.3,181.0 434.0,192.0 450.0,203.0 469.0,212.0 489.0,220.0 515.0,227.4 512.3,248.4 500.6,245.5 477.0,235.8 457.7,226.0 438.0,214.0 428.0,204.0" fill="#202020" stroke="#111" stroke-width="1"/><polygon points="424.2,181.9 432.8,190.8 436.9,212.9 428.8,204.8" fill="#f6f6f6" stroke="#0a0a0a" stroke-width="1.5"/><line x1="424.2" y1="181.9" x2="436.9" y2="212.9" stroke="#111" stroke-width="1.2"/><line x1="432.8" y1="190.8" x2="428.8" y2="204.8" stroke="#111" stroke-width="1"/><line x1="428.5" y1="187.3" x2="429.5" y2="207.9" stroke="#aaa" stroke-width="2"/><polygon points="434.7,192.5 444.9,199.5 448.5,220.4 438.7,214.4" fill="#f6f6f6" stroke="#0a0a0a" stroke-width="1.5"/><line x1="434.7" y1="192.5" x2="448.5" y2="220.4" stroke="#111" stroke-width="1.2"/><line x1="444.9" y1="199.5" x2="438.7" y2="214.4" stroke="#111" stroke-width="1"/><line x1="439.8" y1="197.0" x2="440.8" y2="216.4" stroke="#aaa" stroke-width="2"/><polygon points="447.0,200.9 457.9,206.7 460.3,227.3 450.4,221.6" fill="#f6f6f6" stroke="#0a0a0a" stroke-width="1.5"/><line x1="447.0" y1="200.9" x2="460.3" y2="227.3" stroke="#111" stroke-width="1.2"/><line x1="457.9" y1="206.7" x2="450.4" y2="221.6" stroke="#111" stroke-width="1"/><line x1="452.4" y1="204.8" x2="453.4" y2="223.5" stroke="#aaa" stroke-width="2"/><polygon points="460.1,207.8 471.4,213.0 472.6,233.6 462.4,228.4" fill="#f6f6f6" stroke="#0a0a0a" stroke-width="1.5"/><line x1="460.1" y1="207.8" x2="472.6" y2="233.6" stroke="#111" stroke-width="1.2"/><line x1="471.4" y1="213.0" x2="462.4" y2="228.4" stroke="#111" stroke-width="1"/><line x1="465.8" y1="211.4" x2="466.8" y2="230.0" stroke="#aaa" stroke-width="2"/><polygon points="473.7,213.9 485.3,218.5 485.2,239.2 474.7,234.6" fill="#f6f6f6" stroke="#0a0a0a" stroke-width="1.5"/><line x1="473.7" y1="213.9" x2="485.2" y2="239.2" stroke="#111" stroke-width="1.2"/><line x1="485.3" y1="218.5" x2="474.7" y2="234.6" stroke="#111" stroke-width="1"/><line x1="479.5" y1="217.2" x2="480.5" y2="235.9" stroke="#aaa" stroke-width="2"/><polygon points="487.6,219.4 499.5,223.0 497.9,244.4 487.3,240.0" fill="#f6f6f6" stroke="#0a0a0a" stroke-width="1.5"/><line x1="487.6" y1="219.4" x2="497.9" y2="244.4" stroke="#111" stroke-width="1.2"/><line x1="499.5" y1="223.0" x2="487.3" y2="240.0" stroke="#111" stroke-width="1"/><line x1="493.5" y1="222.2" x2="494.5" y2="241.2" stroke="#aaa" stroke-width="2"/><polygon points="501.9,223.7 513.8,227.1 511.2,248.1 500.1,245.3" fill="#f6f6f6" stroke="#0a0a0a" stroke-width="1.5"/><line x1="501.9" y1="223.7" x2="511.2" y2="248.1" stroke="#111" stroke-width="1.2"/><line x1="513.8" y1="227.1" x2="500.1" y2="245.3" stroke="#111" stroke-width="1"/><line x1="507.8" y1="226.4" x2="508.8" y2="245.7" stroke="#aaa" stroke-width="2"/><polygon points="514.0,234.0 538.0,234.0 538.0,260.0 514.0,260.0" fill="#7080d0" stroke="#3c4aa0" stroke-width="2.2" opacity=".9"/><line x1="514.0" y1="234.0" x2="538.0" y2="260.0" stroke="#3a489e" stroke-width="1.6"/><line x1="514.0" y1="260.0" x2="538.0" y2="234.0" stroke="#3a489e" stroke-width="1.2"/><line x1="518.0" y1="246.0" x2="534.0" y2="246.0" stroke="#4a58aa" stroke-width="1"/><polygon points="540.8,234.5 564.8,234.5 564.8,259.8 540.8,259.8" fill="#7080d0" stroke="#3c4aa0" stroke-width="2.2" opacity=".9"/><line x1="540.8" y1="234.5" x2="564.8" y2="259.8" stroke="#3a489e" stroke-width="1.6"/><line x1="540.8" y1="259.8" x2="564.8" y2="234.5" stroke="#3a489e" stroke-width="1.2"/><line x1="544.8" y1="246.1" x2="560.8" y2="246.1" stroke="#4a58aa" stroke-width="1"/><polygon points="567.6,235.0 591.6,235.0 591.6,259.6 567.6,259.6" fill="#7080d0" stroke="#3c4aa0" stroke-width="2.2" opacity=".9"/><line x1="567.6" y1="235.0" x2="591.6" y2="259.6" stroke="#3a489e" stroke-width="1.6"/><line x1="567.6" y1="259.6" x2="591.6" y2="235.0" stroke="#3a489e" stroke-width="1.2"/><line x1="571.6" y1="246.3" x2="587.6" y2="246.3" stroke="#4a58aa" stroke-width="1"/><polygon points="594.4,235.5 618.4,235.5 618.4,259.4 594.4,259.4" fill="#7080d0" stroke="#3c4aa0" stroke-width="2.2" opacity=".9"/><line x1="594.4" y1="235.5" x2="618.4" y2="259.4" stroke="#3a489e" stroke-width="1.6"/><line x1="594.4" y1="259.4" x2="618.4" y2="235.5" stroke="#3a489e" stroke-width="1.2"/><line x1="598.4" y1="246.4" x2="614.4" y2="246.4" stroke="#4a58aa" stroke-width="1"/><polygon points="621.2,236.0 645.2,236.0 645.2,259.2 621.2,259.2" fill="#7080d0" stroke="#3c4aa0" stroke-width="2.2" opacity=".9"/><line x1="621.2" y1="236.0" x2="645.2" y2="259.2" stroke="#3a489e" stroke-width="1.6"/><line x1="621.2" y1="259.2" x2="645.2" y2="236.0" stroke="#3a489e" stroke-width="1.2"/><line x1="625.2" y1="246.6" x2="641.2" y2="246.6" stroke="#4a58aa" stroke-width="1"/><polygon points="648.0,236.5 672.0,236.5 672.0,259.0 648.0,259.0" fill="#7080d0" stroke="#3c4aa0" stroke-width="2.2" opacity=".9"/><line x1="648.0" y1="236.5" x2="672.0" y2="259.0" stroke="#3a489e" stroke-width="1.6"/><line x1="648.0" y1="259.0" x2="672.0" y2="236.5" stroke="#3a489e" stroke-width="1.2"/><line x1="652.0" y1="246.8" x2="668.0" y2="246.8" stroke="#4a58aa" stroke-width="1"/><polygon points="674.8,237.0 698.8,237.0 698.8,258.8 674.8,258.8" fill="#7080d0" stroke="#3c4aa0" stroke-width="2.2" opacity=".9"/><line x1="674.8" y1="237.0" x2="698.8" y2="258.8" stroke="#3a489e" stroke-width="1.6"/><line x1="674.8" y1="258.8" x2="698.8" y2="237.0" stroke="#3a489e" stroke-width="1.2"/><line x1="678.8" y1="246.9" x2="694.8" y2="246.9" stroke="#4a58aa" stroke-width="1"/><polygon points="701.6,237.5 725.6,237.5 725.6,258.6 701.6,258.6" fill="#7080d0" stroke="#3c4aa0" stroke-width="2.2" opacity=".9"/><line x1="701.6" y1="237.5" x2="725.6" y2="258.6" stroke="#3a489e" stroke-width="1.6"/><line x1="701.6" y1="258.6" x2="725.6" y2="237.5" stroke="#3a489e" stroke-width="1.2"/><line x1="705.6" y1="247.1" x2="721.6" y2="247.1" stroke="#4a58aa" stroke-width="1"/><defs><clipPath id="silclip"><polygon points="416.0,156.4 444.0,126.4 474.0,119.6 514.0,114.0 559.6,113.9 589.8,123.5 599.5,146.0 610.0,157.6 634.7,171.3 662.0,184.0 689.4,192.8 720.6,199.6 748.0,206.5 764.6,218.7 785.0,251.0 792.0,277.3 799.7,284.0 806.6,297.8 806.6,310.5 768.5,329.0 712.8,338.8 590.0,334.0 498.7,318.3 444.0,301.7 406.9,281.2 381.5,254.8 372.7,229.4 373.7,220.6 389.0,204.0 396.0,180.0"/></clipPath></defs><g clip-path="url(#silclip)"><line x1="416.0" y1="156.4" x2="474.0" y2="119.6" stroke="#111" stroke-width="1.05"/><line x1="416.0" y1="156.4" x2="514.0" y2="114.0" stroke="#111" stroke-width="1.05"/><line x1="416.0" y1="156.4" x2="559.6" y2="113.9" stroke="#111" stroke-width="1.05"/><line x1="416.0" y1="156.4" x2="600.0" y2="145.0" stroke="#111" stroke-width="1.05"/><line x1="416.0" y1="156.4" x2="616.0" y2="162.0" stroke="#111" stroke-width="1.05"/><line x1="416.0" y1="156.4" x2="656.0" y2="182.0" stroke="#111" stroke-width="1.05"/><line x1="416.0" y1="156.4" x2="698.0" y2="193.0" stroke="#111" stroke-width="1.05"/><line x1="416.0" y1="156.4" x2="764.6" y2="218.7" stroke="#111" stroke-width="1.05"/><line x1="416.0" y1="156.4" x2="590.0" y2="239.0" stroke="#111" stroke-width="1.05"/><line x1="416.0" y1="156.4" x2="516.0" y2="227.5" stroke="#111" stroke-width="1.05"/><line x1="516.0" y1="227.5" x2="764.6" y2="218.7" stroke="#111" stroke-width="1.0"/><line x1="444.0" y1="126.4" x2="559.6" y2="113.9" stroke="#111" stroke-width="0.9"/><line x1="561.9" y1="127.0" x2="589.8" y2="123.5" stroke="#2a3480" stroke-width="0.8"/><line x1="561.9" y1="127.0" x2="600.0" y2="153.0" stroke="#2a3480" stroke-width="0.8"/><line x1="561.9" y1="127.0" x2="722.0" y2="222.0" stroke="#2a3480" stroke-width="0.8"/><line x1="561.9" y1="127.0" x2="555.0" y2="227.0" stroke="#2a3480" stroke-width="0.8"/><line x1="561.9" y1="127.0" x2="416.0" y2="156.4" stroke="#2a3480" stroke-width="0.8"/><line x1="561.9" y1="127.0" x2="474.0" y2="119.6" stroke="#2a3480" stroke-width="0.8"/><line x1="561.9" y1="127.0" x2="444.0" y2="126.4" stroke="#2a3480" stroke-width="0.8"/><line x1="561.9" y1="127.0" x2="650.0" y2="206.0" stroke="#2a3480" stroke-width="0.8"/><line x1="561.9" y1="127.0" x2="690.0" y2="216.0" stroke="#2a3480" stroke-width="0.8"/><line x1="559.6" y1="113.9" x2="561.9" y2="127.0" stroke="#1a2060" stroke-width="0.9"/><line x1="556.0" y1="230.0" x2="609.0" y2="166.0" stroke="#2a3480" stroke-width="0.8"/><line x1="556.0" y1="230.0" x2="627.0" y2="170.0" stroke="#2a3480" stroke-width="0.8"/><line x1="556.0" y1="230.0" x2="642.0" y2="176.0" stroke="#2a3480" stroke-width="0.8"/><line x1="556.0" y1="230.0" x2="660.0" y2="190.0" stroke="#2a3480" stroke-width="0.8"/><line x1="556.0" y1="230.0" x2="690.0" y2="202.0" stroke="#2a3480" stroke-width="0.8"/><line x1="556.0" y1="230.0" x2="600.0" y2="153.0" stroke="#2a3480" stroke-width="0.8"/><polyline points="585.5,137.0 600.0,153.0 625.6,175.0 658.0,189.8 691.0,202.5 722.0,209.8 758.6,217.0" fill="none" stroke="#2a3480" stroke-width="1"/><line x1="585.5" y1="137.0" x2="599.5" y2="146.0" stroke="#2a3480" stroke-width="0.8"/><line x1="585.5" y1="137.0" x2="610.0" y2="157.6" stroke="#2a3480" stroke-width="0.8"/><line x1="600.0" y1="153.0" x2="610.0" y2="157.6" stroke="#2a3480" stroke-width="0.8"/><line x1="600.0" y1="153.0" x2="634.7" y2="171.3" stroke="#2a3480" stroke-width="0.8"/><line x1="625.6" y1="175.0" x2="634.7" y2="171.3" stroke="#2a3480" stroke-width="0.8"/><line x1="625.6" y1="175.0" x2="662.0" y2="184.0" stroke="#2a3480" stroke-width="0.8"/><line x1="658.0" y1="189.8" x2="662.0" y2="184.0" stroke="#2a3480" stroke-width="0.8"/><line x1="658.0" y1="189.8" x2="689.4" y2="192.8" stroke="#2a3480" stroke-width="0.8"/><line x1="691.0" y1="202.5" x2="689.4" y2="192.8" stroke="#2a3480" stroke-width="0.8"/><line x1="691.0" y1="202.5" x2="720.6" y2="199.6" stroke="#2a3480" stroke-width="0.8"/><line x1="722.0" y1="209.8" x2="720.6" y2="199.6" stroke="#2a3480" stroke-width="0.8"/><line x1="722.0" y1="209.8" x2="748.0" y2="206.5" stroke="#2a3480" stroke-width="0.8"/><line x1="758.6" y1="217.0" x2="748.0" y2="206.5" stroke="#2a3480" stroke-width="0.8"/><line x1="758.6" y1="217.0" x2="764.6" y2="218.7" stroke="#2a3480" stroke-width="0.8"/><line x1="764.6" y1="218.7" x2="590.0" y2="239.0" stroke="#111" stroke-width="0.95"/><line x1="764.6" y1="218.7" x2="693.0" y2="242.0" stroke="#111" stroke-width="0.95"/><line x1="764.6" y1="218.7" x2="691.0" y2="202.5" stroke="#111" stroke-width="0.95"/><line x1="516.0" y1="227.5" x2="590.0" y2="239.0" stroke="#111" stroke-width="1.1"/><line x1="590.0" y1="239.0" x2="693.0" y2="242.0" stroke="#111" stroke-width="1.1"/><line x1="693.0" y1="242.0" x2="731.0" y2="229.0" stroke="#111" stroke-width="1.1"/><line x1="731.0" y1="229.0" x2="764.6" y2="218.7" stroke="#111" stroke-width="1.1"/><line x1="731.0" y1="229.0" x2="785.0" y2="251.0" stroke="#111" stroke-width="1.0"/><line x1="693.0" y1="242.0" x2="755.8" y2="296.8" stroke="#111" stroke-width="1.0"/><line x1="755.8" y1="296.8" x2="792.0" y2="277.3" stroke="#111" stroke-width="1.0"/><line x1="705.0" y1="303.7" x2="755.8" y2="296.8" stroke="#111" stroke-width="1.0"/><line x1="699.0" y1="275.3" x2="785.0" y2="251.0" stroke="#111" stroke-width="1.0"/><line x1="693.0" y1="242.0" x2="699.0" y2="275.3" stroke="#111" stroke-width="1.0"/><line x1="731.0" y1="229.0" x2="755.8" y2="296.8" stroke="#111" stroke-width="1.0"/><line x1="510.4" y1="250.0" x2="590.7" y2="299.8" stroke="#111" stroke-width="1.0"/><line x1="516.0" y1="227.5" x2="590.7" y2="271.4" stroke="#111" stroke-width="1.0"/><line x1="505.5" y1="285.0" x2="590.7" y2="299.8" stroke="#111" stroke-width="1.0"/><line x1="590.0" y1="239.0" x2="590.7" y2="271.4" stroke="#111" stroke-width="1.0"/><line x1="510.4" y1="250.0" x2="693.0" y2="242.0" stroke="#111" stroke-width="1.0"/><line x1="505.5" y1="285.0" x2="590.0" y2="239.0" stroke="#111" stroke-width="1.0"/><polyline points="383.4,247.0 406.9,268.5 444.0,289.0 498.7,306.6 590.5,321.2 712.8,326.0 768.5,318.3 806.6,298.8" fill="none" stroke="#111" stroke-width="1"/><line x1="373.7" y1="220.6" x2="396.0" y2="226.5" stroke="#111" stroke-width="1.0"/><line x1="396.0" y1="225.5" x2="381.5" y2="254.8" stroke="#111" stroke-width="1.0"/><line x1="373.7" y1="229.4" x2="418.6" y2="252.0" stroke="#111" stroke-width="1.0"/><line x1="383.4" y1="247.0" x2="418.6" y2="252.0" stroke="#111" stroke-width="1.0"/><line x1="418.6" y1="252.0" x2="406.9" y2="268.5" stroke="#111" stroke-width="1.0"/><line x1="418.6" y1="252.0" x2="453.8" y2="270.5" stroke="#111" stroke-width="1.0"/><line x1="444.0" y1="289.0" x2="505.5" y2="285.0" stroke="#111" stroke-width="1.0"/><line x1="453.8" y1="270.5" x2="505.5" y2="285.0" stroke="#111" stroke-width="1.0"/><line x1="457.7" y1="243.0" x2="505.5" y2="285.0" stroke="#111" stroke-width="1.0"/><line x1="424.5" y1="225.5" x2="418.6" y2="252.0" stroke="#111" stroke-width="1.0"/><line x1="424.5" y1="225.5" x2="457.7" y2="243.0" stroke="#111" stroke-width="1.0"/><line x1="498.7" y1="306.6" x2="505.5" y2="285.0" stroke="#111" stroke-width="1.0"/><line x1="498.7" y1="306.6" x2="590.5" y2="299.8" stroke="#111" stroke-width="1.0"/><line x1="444.0" y1="289.0" x2="444.0" y2="301.7" stroke="#111" stroke-width="1.0"/><line x1="406.9" y1="268.5" x2="406.9" y2="281.2" stroke="#111" stroke-width="1.0"/><line x1="498.7" y1="306.6" x2="498.7" y2="318.3" stroke="#111" stroke-width="1.0"/><line x1="505.5" y1="285.0" x2="590.5" y2="299.8" stroke="#111" stroke-width="1.0"/><line x1="453.8" y1="270.5" x2="444.0" y2="289.0" stroke="#111" stroke-width="1.0"/><line x1="383.4" y1="247.0" x2="381.5" y2="254.8" stroke="#111" stroke-width="1.0"/><line x1="457.7" y1="243.0" x2="453.8" y2="270.5" stroke="#111" stroke-width="1.0"/><line x1="590.7" y1="299.8" x2="590.0" y2="334.0" stroke="#111" stroke-width="1.0"/><line x1="590.7" y1="299.8" x2="712.8" y2="326.0" stroke="#111" stroke-width="1.0"/><line x1="712.8" y1="303.7" x2="712.8" y2="338.8" stroke="#111" stroke-width="1.0"/><line x1="712.8" y1="326.0" x2="756.8" y2="296.8" stroke="#111" stroke-width="1.0"/><line x1="712.8" y1="338.8" x2="768.5" y2="318.3" stroke="#111" stroke-width="1.0"/><line x1="768.5" y1="318.3" x2="792.0" y2="277.3" stroke="#111" stroke-width="1.0"/><line x1="768.5" y1="329.0" x2="806.6" y2="310.5" stroke="#111" stroke-width="1.0"/><line x1="756.8" y1="296.8" x2="768.5" y2="318.3" stroke="#111" stroke-width="1.0"/><line x1="768.5" y1="317.0" x2="768.5" y2="329.0" stroke="#111" stroke-width="1.0"/><line x1="799.7" y1="284.0" x2="768.5" y2="318.3" stroke="#111" stroke-width="1.0"/><line x1="590.5" y1="321.2" x2="498.7" y2="318.3" stroke="#111" stroke-width="1.0"/><line x1="590.0" y1="334.0" x2="712.8" y2="326.0" stroke="#111" stroke-width="1.0"/><line x1="444.0" y1="301.7" x2="498.7" y2="306.6" stroke="#111" stroke-width="1.0"/><line x1="406.9" y1="281.2" x2="444.0" y2="289.0" stroke="#111" stroke-width="1.0"/><line x1="381.5" y1="254.8" x2="406.9" y2="268.5" stroke="#111" stroke-width="1.0"/><line x1="396.0" y1="226.5" x2="424.5" y2="225.5" stroke="#111" stroke-width="1.0"/><line x1="424.5" y1="225.5" x2="428.0" y2="204.0" stroke="#111" stroke-width="1.0"/><line x1="424.5" y1="225.5" x2="438.0" y2="214.0" stroke="#111" stroke-width="1.0"/><line x1="457.7" y1="243.0" x2="438.0" y2="214.0" stroke="#111" stroke-width="1.0"/><line x1="457.7" y1="243.0" x2="477.0" y2="235.8" stroke="#111" stroke-width="1.0"/><line x1="505.5" y1="285.0" x2="477.0" y2="235.8" stroke="#111" stroke-width="1.0"/><line x1="505.5" y1="285.0" x2="500.6" y2="245.5" stroke="#111" stroke-width="1.0"/><line x1="396.0" y1="226.5" x2="428.0" y2="204.0" stroke="#111" stroke-width="1.0"/><line x1="404.0" y1="202.0" x2="396.0" y2="226.5" stroke="#111" stroke-width="1.0"/><line x1="373.7" y1="220.6" x2="389.0" y2="204.0" stroke="#111" stroke-width="1.0"/><line x1="418.6" y1="252.0" x2="457.7" y2="243.0" stroke="#111" stroke-width="1.0"/><line x1="471" y1="155" x2="471" y2="163" stroke="#20a020" stroke-width="1"/><line x1="555" y1="206" x2="555" y2="220" stroke="#20a020" stroke-width="1"/><line x1="608" y1="159" x2="608" y2="169" stroke="#20a020" stroke-width="1"/><line x1="648" y1="198" x2="648" y2="206" stroke="#20a020" stroke-width="1"/></g><polygon points="416.0,156.4 444.0,126.4 474.0,119.6 514.0,114.0 559.6,113.9 589.8,123.5 599.5,146.0 610.0,157.6 634.7,171.3 662.0,184.0 689.4,192.8 720.6,199.6 748.0,206.5 764.6,218.7 785.0,251.0 792.0,277.3 799.7,284.0 806.6,297.8 806.6,310.5 768.5,329.0 712.8,338.8 590.0,334.0 498.7,318.3 444.0,301.7 406.9,281.2 381.5,254.8 372.7,229.4 373.7,220.6 389.0,204.0 396.0,180.0" fill="none" stroke="#111" stroke-width="1.1"/>
<line x1="11.5" y1="384" x2="11.5" y2="413.5" stroke="#20a020" stroke-width="1.3"/>
<line x1="11.5" y1="413.5" x2="27" y2="422" stroke="#e02020" stroke-width="1.3"/>
<line x1="11.5" y1="413.5" x2="39" y2="409" stroke="#6a8ae0" stroke-width="1.3"/>
<rect x="5.5" y="369.5" width="12.5" height="12" rx="2" fill="#48a030" stroke="#c89040" stroke-width="1"/>
<path d="M8 372l3.7 4.5v4M15.5 372l-3.8 4.5" stroke="#fff" stroke-width="1.6" fill="none"/>
<path d="M28.5 421l7 8M35.5 421l-7 8" stroke="#e81010" stroke-width="1.8"/>
<path d="M44.5 404.5h6.5l-6.5 8h6.5" stroke="#4a8ae8" stroke-width="1.2" fill="none"/>
</svg>
<div class="a" style="left:0;top:0;width:1066px;height:435px;box-shadow:inset 4px 4px 5px -2px rgba(0,0,0,0.28)"></div>
</div>
<div class="a" style="left:0px;top:630px;width:1066px;height:4px;background:#1e1f22"></div>
<div class="a" style="left:0px;top:634px;width:20px;height:61px;background:#28292c"></div>
<div class="a" style="left:0px;top:695px;width:390px;height:73px;background:#2b2c30"></div>
<div class="a" style="left:3px;top:637px;width:14px;height:14px;border:1px solid #111;border-radius:3px;background:linear-gradient(#7a8498,#4a5264);box-shadow:0 0 0 1px #555c6a"></div>
<div class="a" style="left:3px;top:656px;width:14px;height:14px;border:1px solid #111;border-radius:3px;background:linear-gradient(#7a8498,#4a5264);box-shadow:0 0 0 1px #555c6a"></div>
<div class="a" style="left:20px;top:634px;width:1046px;height:61px;background:linear-gradient(#c8c8c8,#b4b4b4);border-left:1px solid #2a2c30"></div>
<div class="a" style="left:21px;top:635px;width:1025px;height:20px;background:linear-gradient(#ececea,#e2e2de)"></div>
<div class="a" style="left:21px;top:655px;width:1025px;height:20px;background:linear-gradient(#f2dc98 0,#ecd080 30%,#ddb448 60%,#c89830 100%);border-bottom:1px solid #8a6a20"></div>
<div class="a" style="left:21px;top:675px;width:1025px;height:20px;background:linear-gradient(#c2c2c2,#aeaeae)"></div>
<div class="a" style="left:1046px;top:635px;width:19px;height:59px;background:#f4f4f4;border-left:1px solid #ddd"></div>
<div class="a" style="left:1048px;top:659px;width:15px;height:17px;background:#d6d6d6"></div>
<div class="a" style="left:97px;top:695px;width:293px;height:53px;background:#2b2c30"></div>
<div class="a" style="left:5px;top:697px;width:3px;height:44px;background:#1f2228;border-left:1px solid #4a5468"></div>
<div class="a" style="left:10px;top:697px;width:108px;height:48px;background:#262a33;border:1px solid #15171c"></div>
<div class="a" style="left:11px;top:698px;width:16px;height:23px;border:1px solid #1a1d24;border-radius:2px;background:linear-gradient(#56607a,#454e64 50%,#343a4a 52%,#2c313e);"></div>
<div class="a" style="left:28px;top:698px;width:72px;height:30px;border:1px solid #1a1d24;border-radius:2px;background:linear-gradient(#56607a,#454e64 50%,#343a4a 52%,#2c313e);"></div>
<div class="a" style="left:101px;top:698px;width:16px;height:23px;border:1px solid #1a1d24;border-radius:2px;background:linear-gradient(#56607a,#454e64 50%,#343a4a 52%,#2c313e);"></div>
<div class="a" style="left:11px;top:722px;width:16px;height:23px;border:1px solid #1a1d24;border-radius:2px;background:linear-gradient(#56607a,#454e64 50%,#343a4a 52%,#2c313e);"></div>
<div class="a" style="left:28px;top:729px;width:15px;height:16px;border:1px solid #1a1d24;border-radius:2px;background:linear-gradient(#56607a,#454e64 50%,#343a4a 52%,#2c313e);"></div>
<div class="a" style="left:44px;top:729px;width:40px;height:16px;border:1px solid #1a1d24;border-radius:2px;background:linear-gradient(#56607a,#454e64 50%,#343a4a 52%,#2c313e);"></div>
<div class="a" style="left:85px;top:729px;width:15px;height:16px;background:linear-gradient(#2e3440,#3c4458 50%,#2a2f3a);border:1px solid #1a1d24"></div>
<div class="a" style="left:101px;top:722px;width:16px;height:23px;border:1px solid #1a1d24;border-radius:2px;background:linear-gradient(#56607a,#454e64 50%,#343a4a 52%,#2c313e);"></div>
<div class="a" style="left:194px;top:698px;width:185px;height:21px;background:#d8d8d8"></div>
<div class="a" style="left:126px;top:723px;width:91px;height:22px;border:1px solid #8a94a8;border-radius:3px;background:linear-gradient(#56617c,#3e4860 50%,#2a3040 52%,#262b36);box-shadow:0 0 0 1px #15181e"></div>
<div class="a" style="left:222px;top:723px;width:67px;height:22px;border:1px solid #2a2d34;border-radius:3px;background:linear-gradient(#55575e,#4a4c53 50%,#3e4046 52%,#393b41);box-shadow:0 0 0 1px #2a2b2e"></div>
<div class="a" style="left:294px;top:723px;width:86px;height:22px;border:1px solid #2a2d34;border-radius:3px;background:linear-gradient(#55575e,#4a4c53 50%,#3e4046 52%,#393b41);box-shadow:0 0 0 1px #2a2b2e"></div>
<div class="a" style="left:386px;top:695px;width:2px;height:53px;background:#1c1e22"></div>
<div class="a" style="left:390px;top:695px;width:676px;height:53px;background:#2b2c30"></div>
<div class="a" style="left:391px;top:697px;width:6px;height:47px;background:#222;border-left:1px solid #3a4050"></div>
<div class="a" style="left:396px;top:697px;width:856px;height:31px;background:linear-gradient(#2e2e30,#343436 30%,#2c2c2e)"></div>
<div class="a" style="left:396px;top:728px;width:856px;height:18px;background:linear-gradient(#484848,#505050)"></div>
<svg class="a" style="left:396px;top:697px;" width="856" height="31" viewBox="0 0 856 31"><line x1="5" y1="5" x2="856" y2="5" stroke="#aaa69c" stroke-width="1"/><line x1="5.3" y1="4.5" x2="5.3" y2="29.5" stroke="#aaa69c" stroke-width="1"/><line x1="12.3" y1="4.5" x2="12.3" y2="10" stroke="#aaa69c" stroke-width="1"/><line x1="19.4" y1="4.5" x2="19.4" y2="10" stroke="#aaa69c" stroke-width="1"/><line x1="26.4" y1="4.5" x2="26.4" y2="10" stroke="#aaa69c" stroke-width="1"/><line x1="33.4" y1="4.5" x2="33.4" y2="10" stroke="#aaa69c" stroke-width="1"/><line x1="40.4" y1="4.5" x2="40.4" y2="10" stroke="#aaa69c" stroke-width="1"/><line x1="47.5" y1="4.5" x2="47.5" y2="10" stroke="#aaa69c" stroke-width="1"/><line x1="54.5" y1="4.5" x2="54.5" y2="10" stroke="#aaa69c" stroke-width="1"/><line x1="61.5" y1="4.5" x2="61.5" y2="10" stroke="#aaa69c" stroke-width="1"/><line x1="68.6" y1="4.5" x2="68.6" y2="10" stroke="#aaa69c" stroke-width="1"/><line x1="75.6" y1="4.5" x2="75.6" y2="10" stroke="#aaa69c" stroke-width="1"/><line x1="82.6" y1="4.5" x2="82.6" y2="10" stroke="#aaa69c" stroke-width="1"/><line x1="89.7" y1="4.5" x2="89.7" y2="10" stroke="#aaa69c" stroke-width="1"/><line x1="96.7" y1="4.5" x2="96.7" y2="10" stroke="#aaa69c" stroke-width="1"/><line x1="103.7" y1="4.5" x2="103.7" y2="10" stroke="#aaa69c" stroke-width="1"/><line x1="110.8" y1="4.5" x2="110.8" y2="10" stroke="#aaa69c" stroke-width="1"/><line x1="117.8" y1="4.5" x2="117.8" y2="10" stroke="#aaa69c" stroke-width="1"/><line x1="124.8" y1="4.5" x2="124.8" y2="10" stroke="#aaa69c" stroke-width="1"/><line x1="131.8" y1="4.5" x2="131.8" y2="10" stroke="#aaa69c" stroke-width="1"/><line x1="138.9" y1="4.5" x2="138.9" y2="10" stroke="#aaa69c" stroke-width="1"/><line x1="145.9" y1="4.5" x2="145.9" y2="10" stroke="#aaa69c" stroke-width="1"/><line x1="152.9" y1="4.5" x2="152.9" y2="10" stroke="#aaa69c" stroke-width="1"/><line x1="160.0" y1="4.5" x2="160.0" y2="10" stroke="#aaa69c" stroke-width="1"/><line x1="167.0" y1="4.5" x2="167.0" y2="10" stroke="#aaa69c" stroke-width="1"/><line x1="174.0" y1="4.5" x2="174.0" y2="15" stroke="#aaa69c" stroke-width="1"/><line x1="181.0" y1="4.5" x2="181.0" y2="10" stroke="#aaa69c" stroke-width="1"/><line x1="188.1" y1="4.5" x2="188.1" y2="10" stroke="#aaa69c" stroke-width="1"/><line x1="195.1" y1="4.5" x2="195.1" y2="10" stroke="#aaa69c" stroke-width="1"/><line x1="202.1" y1="4.5" x2="202.1" y2="10" stroke="#aaa69c" stroke-width="1"/><line x1="209.2" y1="4.5" x2="209.2" y2="10" stroke="#aaa69c" stroke-width="1"/><line x1="216.2" y1="4.5" x2="216.2" y2="10" stroke="#aaa69c" stroke-width="1"/><line x1="223.2" y1="4.5" x2="223.2" y2="10" stroke="#aaa69c" stroke-width="1"/><line x1="230.3" y1="4.5" x2="230.3" y2="10" stroke="#aaa69c" stroke-width="1"/><line x1="237.3" y1="4.5" x2="237.3" y2="10" stroke="#aaa69c" stroke-width="1"/><line x1="244.3" y1="4.5" x2="244.3" y2="10" stroke="#aaa69c" stroke-width="1"/><line x1="251.4" y1="4.5" x2="251.4" y2="10" stroke="#aaa69c" stroke-width="1"/><line x1="258.4" y1="4.5" x2="258.4" y2="10" stroke="#aaa69c" stroke-width="1"/><line x1="265.4" y1="4.5" x2="265.4" y2="10" stroke="#aaa69c" stroke-width="1"/><line x1="272.4" y1="4.5" x2="272.4" y2="10" stroke="#aaa69c" stroke-width="1"/><line x1="279.5" y1="4.5" x2="279.5" y2="10" stroke="#aaa69c" stroke-width="1"/><line x1="286.5" y1="4.5" x2="286.5" y2="10" stroke="#aaa69c" stroke-width="1"/><line x1="293.5" y1="4.5" x2="293.5" y2="10" stroke="#aaa69c" stroke-width="1"/><line x1="300.6" y1="4.5" x2="300.6" y2="10" stroke="#aaa69c" stroke-width="1"/><line x1="307.6" y1="4.5" x2="307.6" y2="10" stroke="#aaa69c" stroke-width="1"/><line x1="314.6" y1="4.5" x2="314.6" y2="10" stroke="#aaa69c" stroke-width="1"/><line x1="321.7" y1="4.5" x2="321.7" y2="10" stroke="#aaa69c" stroke-width="1"/><line x1="328.7" y1="4.5" x2="328.7" y2="10" stroke="#aaa69c" stroke-width="1"/><line x1="335.7" y1="4.5" x2="335.7" y2="10" stroke="#aaa69c" stroke-width="1"/><line x1="342.7" y1="4.5" x2="342.7" y2="15" stroke="#aaa69c" stroke-width="1"/><line x1="349.8" y1="4.5" x2="349.8" y2="10" stroke="#aaa69c" stroke-width="1"/><line x1="356.8" y1="4.5" x2="356.8" y2="10" stroke="#aaa69c" stroke-width="1"/><line x1="363.8" y1="4.5" x2="363.8" y2="10" stroke="#aaa69c" stroke-width="1"/><line x1="370.9" y1="4.5" x2="370.9" y2="10" stroke="#aaa69c" stroke-width="1"/><line x1="377.9" y1="4.5" x2="377.9" y2="10" stroke="#aaa69c" stroke-width="1"/><line x1="384.9" y1="4.5" x2="384.9" y2="10" stroke="#aaa69c" stroke-width="1"/><line x1="392.0" y1="4.5" x2="392.0" y2="10" stroke="#aaa69c" stroke-width="1"/><line x1="399.0" y1="4.5" x2="399.0" y2="10" stroke="#aaa69c" stroke-width="1"/><line x1="406.0" y1="4.5" x2="406.0" y2="10" stroke="#aaa69c" stroke-width="1"/><line x1="413.0" y1="4.5" x2="413.0" y2="10" stroke="#aaa69c" stroke-width="1"/><line x1="420.1" y1="4.5" x2="420.1" y2="10" stroke="#aaa69c" stroke-width="1"/><line x1="427.1" y1="4.5" x2="427.1" y2="10" stroke="#aaa69c" stroke-width="1"/><line x1="434.1" y1="4.5" x2="434.1" y2="10" stroke="#aaa69c" stroke-width="1"/><line x1="441.2" y1="4.5" x2="441.2" y2="10" stroke="#aaa69c" stroke-width="1"/><line x1="448.2" y1="4.5" x2="448.2" y2="10" stroke="#aaa69c" stroke-width="1"/><line x1="455.2" y1="4.5" x2="455.2" y2="10" stroke="#aaa69c" stroke-width="1"/><line x1="462.2" y1="4.5" x2="462.2" y2="10" stroke="#aaa69c" stroke-width="1"/><line x1="469.3" y1="4.5" x2="469.3" y2="10" stroke="#aaa69c" stroke-width="1"/><line x1="476.3" y1="4.5" x2="476.3" y2="10" stroke="#aaa69c" stroke-width="1"/><line x1="483.3" y1="4.5" x2="483.3" y2="10" stroke="#aaa69c" stroke-width="1"/><line x1="490.4" y1="4.5" x2="490.4" y2="10" stroke="#aaa69c" stroke-width="1"/><line x1="497.4" y1="4.5" x2="497.4" y2="10" stroke="#aaa69c" stroke-width="1"/><line x1="504.4" y1="4.5" x2="504.4" y2="10" stroke="#aaa69c" stroke-width="1"/><line x1="511.5" y1="4.5" x2="511.5" y2="15" stroke="#aaa69c" stroke-width="1"/><line x1="518.5" y1="4.5" x2="518.5" y2="10" stroke="#aaa69c" stroke-width="1"/><line x1="525.5" y1="4.5" x2="525.5" y2="10" stroke="#aaa69c" stroke-width="1"/><line x1="532.5" y1="4.5" x2="532.5" y2="10" stroke="#aaa69c" stroke-width="1"/><line x1="539.6" y1="4.5" x2="539.6" y2="10" stroke="#aaa69c" stroke-width="1"/><line x1="546.6" y1="4.5" x2="546.6" y2="10" stroke="#aaa69c" stroke-width="1"/><line x1="553.6" y1="4.5" x2="553.6" y2="10" stroke="#aaa69c" stroke-width="1"/><line x1="560.7" y1="4.5" x2="560.7" y2="10" stroke="#aaa69c" stroke-width="1"/><line x1="567.7" y1="4.5" x2="567.7" y2="10" stroke="#aaa69c" stroke-width="1"/><line x1="574.7" y1="4.5" x2="574.7" y2="10" stroke="#aaa69c" stroke-width="1"/><line x1="581.8" y1="4.5" x2="581.8" y2="10" stroke="#aaa69c" stroke-width="1"/><line x1="588.8" y1="4.5" x2="588.8" y2="10" stroke="#aaa69c" stroke-width="1"/><line x1="595.8" y1="4.5" x2="595.8" y2="10" stroke="#aaa69c" stroke-width="1"/><line x1="602.9" y1="4.5" x2="602.9" y2="10" stroke="#aaa69c" stroke-width="1"/><line x1="609.9" y1="4.5" x2="609.9" y2="10" stroke="#aaa69c" stroke-width="1"/><line x1="616.9" y1="4.5" x2="616.9" y2="10" stroke="#aaa69c" stroke-width="1"/><line x1="623.9" y1="4.5" x2="623.9" y2="10" stroke="#aaa69c" stroke-width="1"/><line x1="631.0" y1="4.5" x2="631.0" y2="10" stroke="#aaa69c" stroke-width="1"/><line x1="638.0" y1="4.5" x2="638.0" y2="10" stroke="#aaa69c" stroke-width="1"/><line x1="645.0" y1="4.5" x2="645.0" y2="10" stroke="#aaa69c" stroke-width="1"/><line x1="652.1" y1="4.5" x2="652.1" y2="10" stroke="#aaa69c" stroke-width="1"/><line x1="659.1" y1="4.5" x2="659.1" y2="10" stroke="#aaa69c" stroke-width="1"/><line x1="666.1" y1="4.5" x2="666.1" y2="10" stroke="#aaa69c" stroke-width="1"/><line x1="673.2" y1="4.5" x2="673.2" y2="10" stroke="#aaa69c" stroke-width="1"/><line x1="680.2" y1="4.5" x2="680.2" y2="15" stroke="#aaa69c" stroke-width="1"/><line x1="687.2" y1="4.5" x2="687.2" y2="10" stroke="#aaa69c" stroke-width="1"/><line x1="694.2" y1="4.5" x2="694.2" y2="10" stroke="#aaa69c" stroke-width="1"/><line x1="701.3" y1="4.5" x2="701.3" y2="10" stroke="#aaa69c" stroke-width="1"/><line x1="708.3" y1="4.5" x2="708.3" y2="10" stroke="#aaa69c" stroke-width="1"/><line x1="715.3" y1="4.5" x2="715.3" y2="10" stroke="#aaa69c" stroke-width="1"/><line x1="722.4" y1="4.5" x2="722.4" y2="10" stroke="#aaa69c" stroke-width="1"/><line x1="729.4" y1="4.5" x2="729.4" y2="10" stroke="#aaa69c" stroke-width="1"/><line x1="736.4" y1="4.5" x2="736.4" y2="10" stroke="#aaa69c" stroke-width="1"/><line x1="743.5" y1="4.5" x2="743.5" y2="10" stroke="#aaa69c" stroke-width="1"/><line x1="750.5" y1="4.5" x2="750.5" y2="10" stroke="#aaa69c" stroke-width="1"/><line x1="757.5" y1="4.5" x2="757.5" y2="10" stroke="#aaa69c" stroke-width="1"/><line x1="764.5" y1="4.5" x2="764.5" y2="10" stroke="#aaa69c" stroke-width="1"/><line x1="771.6" y1="4.5" x2="771.6" y2="10" stroke="#aaa69c" stroke-width="1"/><line x1="778.6" y1="4.5" x2="778.6" y2="10" stroke="#aaa69c" stroke-width="1"/><line x1="785.6" y1="4.5" x2="785.6" y2="10" stroke="#aaa69c" stroke-width="1"/><line x1="792.7" y1="4.5" x2="792.7" y2="10" stroke="#aaa69c" stroke-width="1"/><line x1="799.7" y1="4.5" x2="799.7" y2="10" stroke="#aaa69c" stroke-width="1"/><line x1="806.7" y1="4.5" x2="806.7" y2="10" stroke="#aaa69c" stroke-width="1"/><line x1="813.8" y1="4.5" x2="813.8" y2="10" stroke="#aaa69c" stroke-width="1"/><line x1="820.8" y1="4.5" x2="820.8" y2="10" stroke="#aaa69c" stroke-width="1"/><line x1="827.8" y1="4.5" x2="827.8" y2="10" stroke="#aaa69c" stroke-width="1"/><line x1="834.8" y1="4.5" x2="834.8" y2="10" stroke="#aaa69c" stroke-width="1"/><line x1="841.9" y1="4.5" x2="841.9" y2="10" stroke="#aaa69c" stroke-width="1"/><line x1="848.9" y1="4.5" x2="848.9" y2="15" stroke="#aaa69c" stroke-width="1"/></svg>
<div class="a" style="left:1252px;top:697px;width:6px;height:48px;background:#222"></div>
<div class="a" style="left:97px;top:748px;width:1269px;height:18px;background:#1b1b1c"></div>
<div class="a" style="left:0px;top:748px;width:97px;height:18px;background:#1b1b1c"></div>
<div class="a" style="left:0px;top:766px;width:1366px;height:2px;background:#5a4a20"></div>
<div class="a" style="left:502px;top:766px;width:35px;height:2px;background:#e8a020"></div>
<div class="a" style="left:972px;top:751px;width:65px;height:15px;background:linear-gradient(#4a70d0,#2a50b8 50%,#1e3e98);border:1px solid #12203a"></div>
<div class="a" style="left:1043px;top:751px;width:32px;height:15px;background:linear-gradient(#f0c050,#d89820 60%,#c08010);border:1px solid #2a2008"></div>
<div class="a" style="left:1081px;top:751px;width:53px;height:15px;background:linear-gradient(#6a7aa8,#4a5a8a 50%,#38467a);border:1px solid #15182a"></div>
<div class="a" style="left:1140px;top:751px;width:18px;height:15px;background:#2a2c30;border:1px solid #3a3c40"></div>
<div class="a" style="left:0px;top:630px;width:106px;height:138px;background:rgba(108,130,195,0.25);clip-path:polygon(0 0,105px 0,105px 4px,20px 4px,20px 65px,101px 65px,97px 138px,0 138px);pointer-events:none"></div>
<svg class="a" style="left:5px;top:639px;" width="10" height="10" viewBox="0 0 10 10"><path d="M1 1l8 8M9 1L1 9" stroke="#000" stroke-width="1.5"/></svg>
<svg class="a" style="left:5px;top:658px;" width="10" height="10" viewBox="0 0 10 10"><path d="M3 1h4v4h2v1H1V5h2z" fill="#000"/><rect x="4.3" y="6" width="1.4" height="4" fill="#000"/></svg>
<div class="t" style="left:3px;top:673px;font-size:12px;color:#e8e8dc;transform-origin:0 0;transform:rotate(90deg) translate(0,-13px);">Mes</div>
<svg class="a" style="left:34px;top:637px;" width="16" height="16" viewBox="0 0 16 16"><circle cx="8" cy="8" r="7.5" fill="#2a6ad0"/><circle cx="8" cy="6" r="5" fill="#6aa6f0" opacity=".6"/><rect x="7" y="6.5" width="2.2" height="6.5" fill="#fff"/><circle cx="8.1" cy="4.2" r="1.3" fill="#fff"/></svg>
<div class="t" style="left:53px;top:640px;font-size:12px;color:#1a1a1a;letter-spacing:0">Performing autosave to "c:\users\thepi\desktop\toda la mierda k no se donde poner\zmodeler3/autosave.z3d"</div>
<svg class="a" style="left:34px;top:657px;" width="16" height="16" viewBox="0 0 16 16"><circle cx="8" cy="8" r="7.5" fill="#2a6ad0"/><circle cx="8" cy="6" r="5" fill="#6aa6f0" opacity=".6"/><rect x="7" y="6.5" width="2.2" height="6.5" fill="#fff"/><circle cx="8.1" cy="4.2" r="1.3" fill="#fff"/></svg>
<div class="t" style="left:53px;top:660px;font-size:12px;color:#1a1a1a;letter-spacing:0">Performing autosave to "c:\users\thepi\desktop\toda la mierda k no se donde poner\zmodeler3/autosave.z3d"</div>
<svg class="a" style="left:1050px;top:640px;" width="11" height="7" viewBox="0 0 11 7"><path d="M1 6l4.5-4.5L10 6" stroke="#222" stroke-width="1.3" fill="none"/></svg>
<svg class="a" style="left:1050px;top:682px;" width="11" height="7" viewBox="0 0 11 7"><path d="M1 1l4.5 4.5L10 1" stroke="#222" stroke-width="1.3" fill="none"/></svg>
<div class="t" style="left:53px;top:706px;font-size:13px;color:#0a0a0c;"><b>Play</b></div>
<div class="t" style="left:58px;top:731px;font-size:12.8px;color:#0a0a0c;"><b>1x</b></div>
<svg class="a" style="left:14px;top:705px;" width="10" height="10" viewBox="0 0 10 10"><path d="M2 1v8" stroke="#7a849a" stroke-width="1.2"/><path d="M9 1L3 5l6 4z" fill="#7a849a"/></svg>
<svg class="a" style="left:106px;top:705px;" width="10" height="10" viewBox="0 0 10 10"><path d="M8 1v8" stroke="#7a849a" stroke-width="1.2"/><path d="M1 1l6 4-6 4z" fill="#7a849a"/></svg>
<svg class="a" style="left:14px;top:730px;" width="10" height="9" viewBox="0 0 10 9"><path d="M5 1L1 4.5 5 8zM9 1L5 4.5 9 8z" fill="#7a849a"/></svg>
<svg class="a" style="left:106px;top:730px;" width="10" height="9" viewBox="0 0 10 9"><path d="M1 1l4 3.5L1 8zM5 1l4 3.5L5 8z" fill="#7a849a"/></svg>
<svg class="a" style="left:33px;top:734px;" width="5" height="6" viewBox="0 0 5 6"><path d="M5 0v6L0 3z" fill="#7a849a"/></svg>
<svg class="a" style="left:90px;top:734px;" width="5" height="6" viewBox="0 0 5 6"><path d="M0 0v6l5-3z" fill="#7a849a"/></svg>
<div class="t" style="left:136px;top:704px;font-size:11.9px;color:#e8e8dc;">Animation:</div>
<svg class="a" style="left:364px;top:705px;" width="10" height="6" viewBox="0 0 10 6"><path d="M1 1l4 4 4-4" stroke="#aaa" stroke-width="1.2" fill="none"/></svg>
<svg class="a" style="left:129px;top:725px;" width="16" height="17" viewBox="0 0 16 17"><rect x="0" y="0" width="16" height="17" fill="#8a5a30"/><rect x="2" y="2" width="12" height="13" fill="#e8e0d0"/><path d="M5 5l6 3.5L5 12z" fill="#111"/></svg>
<div class="t" style="left:152px;top:729px;font-size:12px;color:#f0f0e8;">Track Editor</div>
<svg class="a" style="left:225px;top:725px;" width="16" height="17" viewBox="0 0 16 17"><rect x="2" y="4" width="3" height="13" fill="#50b040"/><rect x="5" y="6" width="2" height="11" fill="#d8d0a0"/><circle cx="11" cy="6" r="4" fill="#e87020"/><circle cx="11" cy="6" r="2" fill="#f0d040"/></svg>
<div class="t" style="left:247px;top:729px;font-size:12px;color:#050505;">Set Key</div>
<svg class="a" style="left:297px;top:725px;" width="17" height="17" viewBox="0 0 17 17"><rect x="1" y="3" width="3" height="14" fill="#c03028"/><rect x="4" y="5" width="2" height="12" fill="#d8d0a0"/><path d="M7 9l3 5 6-8" stroke="#30a040" stroke-width="2.5" fill="none"/></svg>
<div class="t" style="left:321px;top:729px;font-size:12.2px;color:#050505;">Free mode</div>
<div class="t" style="left:404px;top:716px;font-size:11.5px;color:#8a8a8a;">0</div>
<div class="t" style="left:564px;top:716px;font-size:11.5px;color:#8a8a8a;">24</div>
<div class="t" style="left:732px;top:716px;font-size:11.5px;color:#8a8a8a;">48</div>
<div class="t" style="left:901px;top:716px;font-size:11.5px;color:#8a8a8a;">72</div>
<div class="t" style="left:1070px;top:716px;font-size:11.5px;color:#8a8a8a;">96</div>
<div class="t" style="left:1238px;top:716px;font-size:11.5px;color:#8a8a8a;">12</div>
<div class="t" style="left:984px;top:752px;font-size:12.2px;color:#f0f0ff;">Selected</div>
<div class="t" style="left:1046px;top:752px;font-size:12.2px;color:#1a1a1a;">Auto</div>
<svg class="a" style="left:1086px;top:753px;" width="10" height="10" viewBox="0 0 10 10"><circle cx="5" cy="5" r="4.2" fill="#e01818" stroke="#fff" stroke-width=".8"/></svg>
<div class="t" style="left:1102px;top:752px;font-size:12.2px;color:#f0f0f8;">Pivot</div>
<svg class="a" style="left:1143px;top:752px;" width="11" height="11" viewBox="0 0 11 11"><path d="M1 1l9 9M10 1L1 10" stroke="#000" stroke-width="1.4"/></svg>
<div class="t" style="left:1165px;top:752px;font-size:12px;color:#f0f0f0;">Cursor: 0.19257, 1.10359, 0.58029</div>
<div class="a" style="left:1066px;top:70px;width:300px;height:625px;background:#28292c"></div>
<div class="a" style="left:1066px;top:194px;width:4px;height:501px;background:#1f2024"></div>
<div class="a" style="left:1070px;top:70px;width:296px;height:20px;background:linear-gradient(#3e4452,#333843 50%,#2a2d35)"></div>
<div class="t" style="left:1074px;top:74px;font-size:12.8px;color:#ecece0;">Scene nodes browser</div>
<div class="a" style="left:1331px;top:71px;width:15px;height:16px;border:1px solid #111;border-radius:3px;background:linear-gradient(#6a7488,#3e4656);box-shadow:0 0 0 1px #5a6272"></div>
<div class="a" style="left:1350px;top:71px;width:15px;height:16px;border:1px solid #111;border-radius:3px;background:linear-gradient(#6a7488,#3e4656);box-shadow:0 0 0 1px #5a6272"></div>
<svg class="a" style="left:1334px;top:73px;" width="10" height="11" viewBox="0 0 10 11"><path d="M3 1h4v4h2v1H1V5h2z" fill="#000"/><rect x="4.3" y="6" width="1.4" height="4" fill="#000"/></svg>
<svg class="a" style="left:1353px;top:74px;" width="9" height="9" viewBox="0 0 9 9"><path d="M1 1l7 7M8 1L1 8" stroke="#000" stroke-width="1.5"/></svg>
<div class="a" style="left:1070px;top:90px;width:296px;height:605px;background:#28292c"></div>
<div class="a" style="left:1070px;top:90px;width:296px;height:21px;background:linear-gradient(#4c5870,#3c475c)"></div>
<div class="a" style="left:1070px;top:111px;width:296px;height:299px;background:#384256"></div>
<div class="a" style="left:1076px;top:111px;width:284px;height:297px;background:#28292b;border:1px solid #46526c"></div>
<div class="a" style="left:1077px;top:112px;width:85px;height:295px;background:linear-gradient(#3a4356,#353d4e);clip-path:polygon(0 0,85px 0,78px 295px,0 295px)"></div>
<div class="a" style="left:1076px;top:93px;width:61px;height:18px;background:linear-gradient(#424a5c,#30363f);border:1px solid #1a1d22;border-bottom:none;border-radius:3px 3px 0 0"></div>
<div class="t" style="left:1082px;top:96px;font-size:11.8px;color:#ecece0;">Hierarchy</div>
<div class="a" style="left:1137px;top:90px;width:59px;height:22px;background:linear-gradient(#56627c,#48536a);border:1px solid #5a6680;border-bottom:none;border-radius:3px 3px 0 0"></div>
<div class="t" style="left:1142px;top:94px;font-size:11.8px;color:#ecece0;">Structure</div>
<div class="a" style="left:1196px;top:93px;width:65px;height:18px;background:linear-gradient(#424a5c,#30363f);border:1px solid #1a1d22;border-bottom:none;border-radius:3px 3px 0 0"></div>
<div class="t" style="left:1202px;top:96px;font-size:11.8px;color:#ecece0;">Properties</div>
<div class="a" style="left:1078px;top:118px;width:24px;height:18px;border:1px solid #2a2008;border-radius:3px;background:linear-gradient(#f0c860,#d89c28 60%,#c88818);box-shadow:0 0 0 1px #5a5040"></div>
<div class="t" style="left:1078px;top:121px;width:24px;text-align:center;font-size:12.3px;color:#2a2008">L0</div>
<div class="a" style="left:1105px;top:118px;width:23px;height:18px;border:1px solid #0e1014;border-radius:3px;background:linear-gradient(#6a7898 0,#56648a 35%,#2e3650 60%,#222838 100%);box-shadow:0 0 0 1px #4a5060"></div>
<div class="t" style="left:1105px;top:121px;width:23px;text-align:center;font-size:12.3px;color:#f0f0f0">L1</div>
<div class="a" style="left:1132px;top:118px;width:23px;height:18px;border:1px solid #0e1014;border-radius:3px;background:linear-gradient(#6a7898 0,#56648a 35%,#2e3650 60%,#222838 100%);box-shadow:0 0 0 1px #4a5060"></div>
<div class="t" style="left:1132px;top:121px;width:23px;text-align:center;font-size:12.3px;color:#f0f0f0">L2</div>
<div class="a" style="left:1159px;top:118px;width:23px;height:18px;border:1px solid #0e1014;border-radius:3px;background:linear-gradient(#6a7898 0,#56648a 35%,#2e3650 60%,#222838 100%);box-shadow:0 0 0 1px #4a5060"></div>
<div class="t" style="left:1159px;top:121px;width:23px;text-align:center;font-size:12.3px;color:#f0f0f0">L3</div>
<div class="a" style="left:1186px;top:118px;width:23px;height:18px;border:1px solid #0e1014;border-radius:3px;background:linear-gradient(#6a7898 0,#56648a 35%,#2e3650 60%,#222838 100%);box-shadow:0 0 0 1px #4a5060"></div>
<div class="t" style="left:1186px;top:121px;width:23px;text-align:center;font-size:12.3px;color:#f0f0f0">L4</div>
<div class="a" style="left:1213px;top:118px;width:32px;height:18px;border:1px solid #0e1014;border-radius:3px;background:linear-gradient(#6a7898 0,#56648a 35%,#2e3650 60%,#222838 100%);box-shadow:0 0 0 1px #4a5060"></div>
<div class="t" style="left:1213px;top:121px;width:32px;text-align:center;font-size:12.3px;color:#f0f0f0">COL</div>
<div class="a" style="left:1249px;top:118px;width:41px;height:18px;border:1px solid #0e1014;border-radius:3px;background:linear-gradient(#6a7898 0,#56648a 35%,#2e3650 60%,#222838 100%);box-shadow:0 0 0 1px #4a5060"></div>
<div class="t" style="left:1249px;top:121px;width:41px;text-align:center;font-size:12.3px;color:#f0f0f0">Dust</div>
<div class="a" style="left:1294px;top:118px;width:33px;height:18px;border:1px solid #0e1014;border-radius:3px;background:linear-gradient(#6a7898 0,#56648a 35%,#2e3650 60%,#222838 100%);box-shadow:0 0 0 1px #4a5060"></div>
<div class="t" style="left:1294px;top:121px;width:33px;text-align:center;font-size:12.3px;color:#f0f0f0">Dirt</div>
<div class="a" style="left:1078px;top:139px;width:50px;height:18px;border:1px solid #0e1014;border-radius:3px;background:linear-gradient(#6a7898 0,#56648a 35%,#2e3650 60%,#222838 100%);box-shadow:0 0 0 1px #4a5060"></div>
<div class="t" style="left:1078px;top:142px;width:50px;text-align:center;font-size:12.3px;color:#f0f0f0">Scratch</div>
<div class="a" style="left:1132px;top:139px;width:42px;height:18px;border:1px solid #0e1014;border-radius:3px;background:linear-gradient(#6a7898 0,#56648a 35%,#2e3650 60%,#222838 100%);box-shadow:0 0 0 1px #4a5060"></div>
<div class="t" style="left:1132px;top:142px;width:42px;text-align:center;font-size:12.3px;color:#f0f0f0">Burn</div>
<div class="a" style="left:1250px;top:139px;width:49px;height:18px;border:1px solid #0e1014;border-radius:3px;background:linear-gradient(#6a7898 0,#56648a 35%,#2e3650 60%,#222838 100%);box-shadow:0 0 0 1px #4a5060"></div>
<div class="t" style="left:1250px;top:142px;width:49px;text-align:center;font-size:12.3px;color:#f0f0f0">Motion</div>
<div class="a" style="left:1178px;top:139px;width:68px;height:18px;border:1px solid #0e1014;border-radius:3px;background:linear-gradient(#6a7898 0,#56648a 35%,#2e3650 60%,#222838 100%);box-shadow:0 0 0 1px #4a5060"></div>
<div class="t" style="left:1184px;top:142px;font-size:12.3px;color:#f0f0f0;">Damage</div>
<div class="a" style="left:1234px;top:142px;width:1px;height:12px;background:#1a1d24"></div>
<svg class="a" style="left:1236px;top:147px;" width="7" height="4" viewBox="0 0 7 4"><path d="M0 0h7L3.5 4z" fill="#000"/></svg>
<div class="a" style="left:1081px;top:169px;width:83px;height:1px;background:linear-gradient(90deg,#1e2024,#3e5a8a)"></div>
<div class="a" style="left:1268px;top:169px;width:82px;height:1px;background:linear-gradient(90deg,#3e5a8a,#2a2e36)"></div>
<div class="t" style="left:1164px;top:163px;width:104px;text-align:center;font-size:12.2px;color:#3e3e3a">Custom scene state:</div>
<div class="a" style="left:1081px;top:190px;width:79px;height:1px;background:linear-gradient(90deg,#1e2024,#3e5a8a)"></div>
<div class="a" style="left:1272px;top:190px;width:78px;height:1px;background:linear-gradient(90deg,#3e5a8a,#2a2e36)"></div>
<div class="t" style="left:1160px;top:184px;width:112px;text-align:center;font-size:12.2px;color:#3e3e3a">Custom state actions:</div>
<div class="a" style="left:1081px;top:232px;width:69px;height:1px;background:linear-gradient(90deg,#1e2024,#3e5a8a)"></div>
<div class="a" style="left:1283px;top:232px;width:67px;height:1px;background:linear-gradient(90deg,#3e5a8a,#2a2e36)"></div>
<div class="t" style="left:1150px;top:226px;width:133px;text-align:center;font-size:12.2px;color:#3e3e3a">Selection structure states:</div>
<div class="a" style="left:1078px;top:202px;width:69px;height:18px;border:1px solid #0e1014;border-radius:3px;background:linear-gradient(#6a7898 0,#56648a 35%,#2e3650 60%,#222838 100%);box-shadow:0 0 0 1px #4a5060"></div>
<div class="t" style="left:1078px;top:205px;width:69px;text-align:center;font-size:12.3px;color:#f0f0f0">New State</div>
<div class="a" style="left:1151px;top:202px;width:77px;height:18px;border:1px solid #15171b;border-radius:3px;background:linear-gradient(#4a5264 0,#3e4554 45%,#2c313c 55%,#272b34 100%);box-shadow:inset 0 -1px 0 #48587a,0 0 0 1px #34373e"></div>
<div class="t" style="left:1151px;top:205px;width:77px;text-align:center;font-size:12.3px;color:#16171b">Delete State</div>
<div class="a" style="left:1231px;top:202px;width:60px;height:18px;border:1px solid #15171b;border-radius:3px;background:linear-gradient(#4a5264 0,#3e4554 45%,#2c313c 55%,#272b34 100%);box-shadow:inset 0 -1px 0 #48587a,0 0 0 1px #34373e"></div>
<div class="t" style="left:1231px;top:205px;width:60px;text-align:center;font-size:12.3px;color:#16171b">Edit State</div>
<div class="a" style="left:1078px;top:244px;width:275px;height:17px;border:1px solid #1a1c22;border-radius:2px;background:linear-gradient(#3e4454,#30353f 50%,#26292f)"></div>
<div class="a" style="left:1078px;top:244px;width:18px;height:17px;border:1px solid #1a1c22;border-radius:2px;background:linear-gradient(#4a5264,#343a46)"></div>
<svg class="a" style="left:1080px;top:245px;" width="14" height="15" viewBox="0 0 14 15"><path d="M3 7V4a3 3 0 0 1 6 0" stroke="#b08040" stroke-width="1.5" fill="none"/><rect x="4" y="7" width="9" height="7" fill="#c89050"/></svg>
<div class="t" style="left:1096px;top:247px;width:257px;text-align:center;font-size:12.8px;color:#0a0a0a;font-weight:bold">puente</div>
<div class="a" style="left:1078px;top:265px;width:158px;height:39px;border:1px solid #0e1014;border-radius:3px;background:linear-gradient(#6a7898 0,#56648a 35%,#2e3650 60%,#222838 100%);box-shadow:0 0 0 1px #4a5060"></div>
<svg class="a" style="left:1082px;top:269px;" width="30" height="30" viewBox="0 0 30 30"><path d="M2 14l13-5 13 5v12l-13 4-13-4z" fill="#e8b030"/><path d="M2 14l13 4 13-4-13-5z" fill="#f8d870"/><path d="M15 18v12" stroke="#b07818" stroke-width="1"/><path d="M12 12q2-8 10-9l-1-3 7 5-6 5v-3q-5 0-7 6z" fill="#30a030"/></svg>
<div class="t" style="left:1117px;top:279px;font-size:12.6px;color:#f0f0f0;transform:scaleX(0.95);transform-origin:0 0">Convert to Compound</div>
<div class="a" style="left:1241px;top:265px;width:77px;height:39px;border:1px solid #15171b;border-radius:3px;background:linear-gradient(#4a5264 0,#3e4554 45%,#2c313c 55%,#272b34 100%);box-shadow:inset 0 -1px 0 #48587a,0 0 0 1px #34373e"></div>
<svg class="a" style="left:1244px;top:268px;" width="30" height="32" viewBox="0 0 30 32"><path d="M3 18l12-5 12 5v10l-12 4-12-4z" fill="#a8683a"/><path d="M3 18l12 4 12-4-12-5z" fill="#c8885a"/><path d="M15 2l-9 9h5v10h8V11h5z" fill="#309038"/></svg>
<div class="t" style="left:1276px;top:280px;font-size:11.8px;color:#16171b;">Dismiss</div>
<div class="a" style="left:1321px;top:265px;width:32px;height:18px;border:1px solid #15171b;border-radius:3px;background:linear-gradient(#4a5264 0,#3e4554 45%,#2c313c 55%,#272b34 100%);box-shadow:inset 0 -1px 0 #48587a,0 0 0 1px #34373e"></div>
<div class="t" style="left:1321px;top:268px;width:32px;text-align:center;font-size:12.3px;color:#16171b">Del</div>
<div class="a" style="left:1321px;top:286px;width:32px;height:17px;border:1px solid #15171b;border-radius:3px;background:linear-gradient(#4a5264 0,#3e4554 45%,#2c313c 55%,#272b34 100%);box-shadow:inset 0 -1px 0 #48587a,0 0 0 1px #34373e"></div>
<div class="t" style="left:1321px;top:289px;width:32px;text-align:center;font-size:12.3px;color:#16171b">Lock</div>
<div class="a" style="left:1078px;top:308px;width:51px;height:17px;border:1px solid #0e1014;border-radius:3px;background:linear-gradient(#6a7898 0,#56648a 35%,#2e3650 60%,#222838 100%);box-shadow:0 0 0 1px #4a5060"></div>
<div class="t" style="left:1078px;top:311px;width:51px;text-align:center;font-size:12.3px;color:#f0f0f0">Group</div>
<div class="a" style="left:1132px;top:308px;width:60px;height:17px;border:1px solid #15171b;border-radius:3px;background:linear-gradient(#4a5264 0,#3e4554 45%,#2c313c 55%,#272b34 100%);box-shadow:inset 0 -1px 0 #48587a,0 0 0 1px #34373e"></div>
<div class="t" style="left:1132px;top:311px;width:60px;text-align:center;font-size:12.3px;color:#16171b">Ungroup</div>
<div class="a" style="left:1196px;top:308px;width:77px;height:17px;border:1px solid #15171b;border-radius:3px;background:linear-gradient(#4a5264 0,#3e4554 45%,#2c313c 55%,#272b34 100%);box-shadow:inset 0 -1px 0 #48587a,0 0 0 1px #34373e"></div>
<div class="t" style="left:1196px;top:311px;width:77px;text-align:center;font-size:12.3px;color:#16171b">Open group</div>
<div class="a" style="left:1276px;top:308px;width:77px;height:17px;border:1px solid #15171b;border-radius:3px;background:linear-gradient(#4a5264 0,#3e4554 45%,#2c313c 55%,#272b34 100%);box-shadow:inset 0 -1px 0 #48587a,0 0 0 1px #34373e"></div>
<div class="t" style="left:1276px;top:311px;width:77px;text-align:center;font-size:12.3px;color:#16171b">Close group</div>
<div class="a" style="left:1079px;top:330px;width:278px;height:73px;background:linear-gradient(#e8e6e0 0,#e2e0da 27%,#c9c9c9 28%,#a2a2a2 100%);border:1px solid #6a7a98"></div>
<div class="a" style="left:1070px;top:408px;width:296px;height:15px;background:#1e1f22"></div>
<div class="a" style="left:1071px;top:414px;width:292px;height:7px;border:1px solid #4a5670;border-radius:3px;background:linear-gradient(#2a3040,#3e4a62)"></div>
<div class="a" style="left:1071px;top:423px;width:295px;height:245px;background:linear-gradient(#cacaca,#9e9e9e);border-bottom:1px solid #4a5a78"></div>
<div class="a" style="left:1072px;top:424px;width:290px;height:19px;background:linear-gradient(#f2eedd,#e8e0c0 50%,#ddd0a8);border-bottom:1px solid #7a6020"></div>
<svg class="a" style="left:1073px;top:428px;" width="10" height="10" viewBox="0 0 10 10"><rect x=".5" y=".5" width="9" height="9" fill="#fff" stroke="#777"/><path d="M2 5h6M5 2v6" stroke="#000" stroke-width="1"/></svg>
<svg class="a" style="left:1086px;top:426px;" width="13" height="13" viewBox="0 0 13 13"><rect x=".5" y=".5" width="12" height="12" fill="#fff" stroke="#555"/><path d="M2.5 6l3 4 6-9" stroke="#1a4ae0" stroke-width="2" fill="none"/></svg>
<div class="t" style="left:1100px;top:427px;font-size:12.8px;color:#0a0a0a;">puente</div>
<div class="a" style="left:1066px;top:669px;width:300px;height:26px;background:#222326"></div>
<div class="a" style="left:1079px;top:670px;width:287px;height:23px;background:linear-gradient(#3c3e44,#2e3034 50%,#25272b);border-radius:2px"></div>
<svg class="a" style="left:1083px;top:673px;" width="15" height="17" viewBox="0 0 15 17"><path d="M1 4l6-3 6 3v8l-6 3-6-3z" fill="#2a6ad8"/><path d="M1 4l6 3 6-3-6-3z" fill="#9ac8f8"/><path d="M0 13h11v3H0z" fill="#e8a040"/></svg>
<div class="t" style="left:1102px;top:675px;font-size:12.8px;color:#ecece0;">Isolated</div>
<svg class="a" style="left:1154px;top:672px;" width="14" height="18" viewBox="0 0 14 18"><rect x=".5" y=".5" width="13" height="17" fill="#e8eef8" stroke="#8898b8"/><rect x="2" y="3" width="5" height="4" fill="#fff" stroke="#333" stroke-width=".8"/><rect x="2" y="10" width="5" height="4" fill="#fff" stroke="#333" stroke-width=".8"/></svg>
<div class="t" style="left:1172px;top:675px;font-size:12.8px;color:#ecece0;">Show All</div>
<svg class="a" style="left:1229px;top:672px;" width="14" height="18" viewBox="0 0 14 18"><rect x=".5" y=".5" width="13" height="17" fill="#dfe6f2" stroke="#98a8c0"/><rect x="2" y="3" width="5" height="5" fill="#fff" stroke="#333" stroke-width=".8"/><rect x="2" y="10" width="5" height="5" fill="#fff" stroke="#333" stroke-width=".8"/></svg>
<svg class="a" style="left:1252px;top:672px;" width="14" height="18" viewBox="0 0 14 18"><rect x=".5" y=".5" width="13" height="17" fill="#dfe6f2" stroke="#98a8c0"/><path d="M7 2l-4 4h8z" fill="#e02020"/><rect x="6" y="5" width="2" height="6" fill="#e02020"/><rect x="2" y="12" width="10" height="3" fill="#8898b8"/></svg>
<svg class="a" style="left:1275px;top:672px;" width="14" height="18" viewBox="0 0 14 18"><rect x=".5" y=".5" width="13" height="17" fill="#dfe6f2" stroke="#98a8c0"/><rect x="2" y="2" width="10" height="3" fill="#8898b8"/><rect x="6" y="6" width="2" height="5" fill="#e02020"/><path d="M7 15l-4-4h8z" fill="#e02020"/></svg>
<svg class="a" style="left:1297px;top:672px;" width="14" height="18" viewBox="0 0 14 18"><rect x=".5" y=".5" width="13" height="17" fill="#dfe6f2" stroke="#98a8c0"/><path d="M8 2h4v7H6" stroke="#e02020" stroke-width="2" fill="none"/><path d="M3 9l4-3v6z" fill="#e02020"/><rect x="2" y="12" width="10" height="3" fill="#8898b8"/></svg>
<svg class="a" style="left:1320px;top:672px;" width="14" height="18" viewBox="0 0 14 18"><rect x=".5" y=".5" width="13" height="17" fill="#dfe6f2" stroke="#98a8c0"/><rect x="0" y="1" width="6" height="6" fill="#fff" stroke="#000" stroke-width=".8"/><path d="M1 4h4M3 2v4" stroke="#1a4ae0" stroke-width="1"/><rect x="6" y="8" width="7" height="3" fill="#8898b8"/><rect x="6" y="13" width="7" height="3" fill="#8898b8"/></svg>
<svg class="a" style="left:1342px;top:672px;" width="14" height="18" viewBox="0 0 14 18"><rect x=".5" y=".5" width="13" height="17" fill="#dfe6f2" stroke="#98a8c0"/><rect x="0" y="1" width="6" height="6" fill="#fff" stroke="#000" stroke-width=".8"/><path d="M1 4h4" stroke="#1a4ae0" stroke-width="1"/><rect x="6" y="8" width="7" height="3" fill="#8898b8"/><rect x="6" y="13" width="7" height="3" fill="#8898b8"/></svg>
</body></html>
